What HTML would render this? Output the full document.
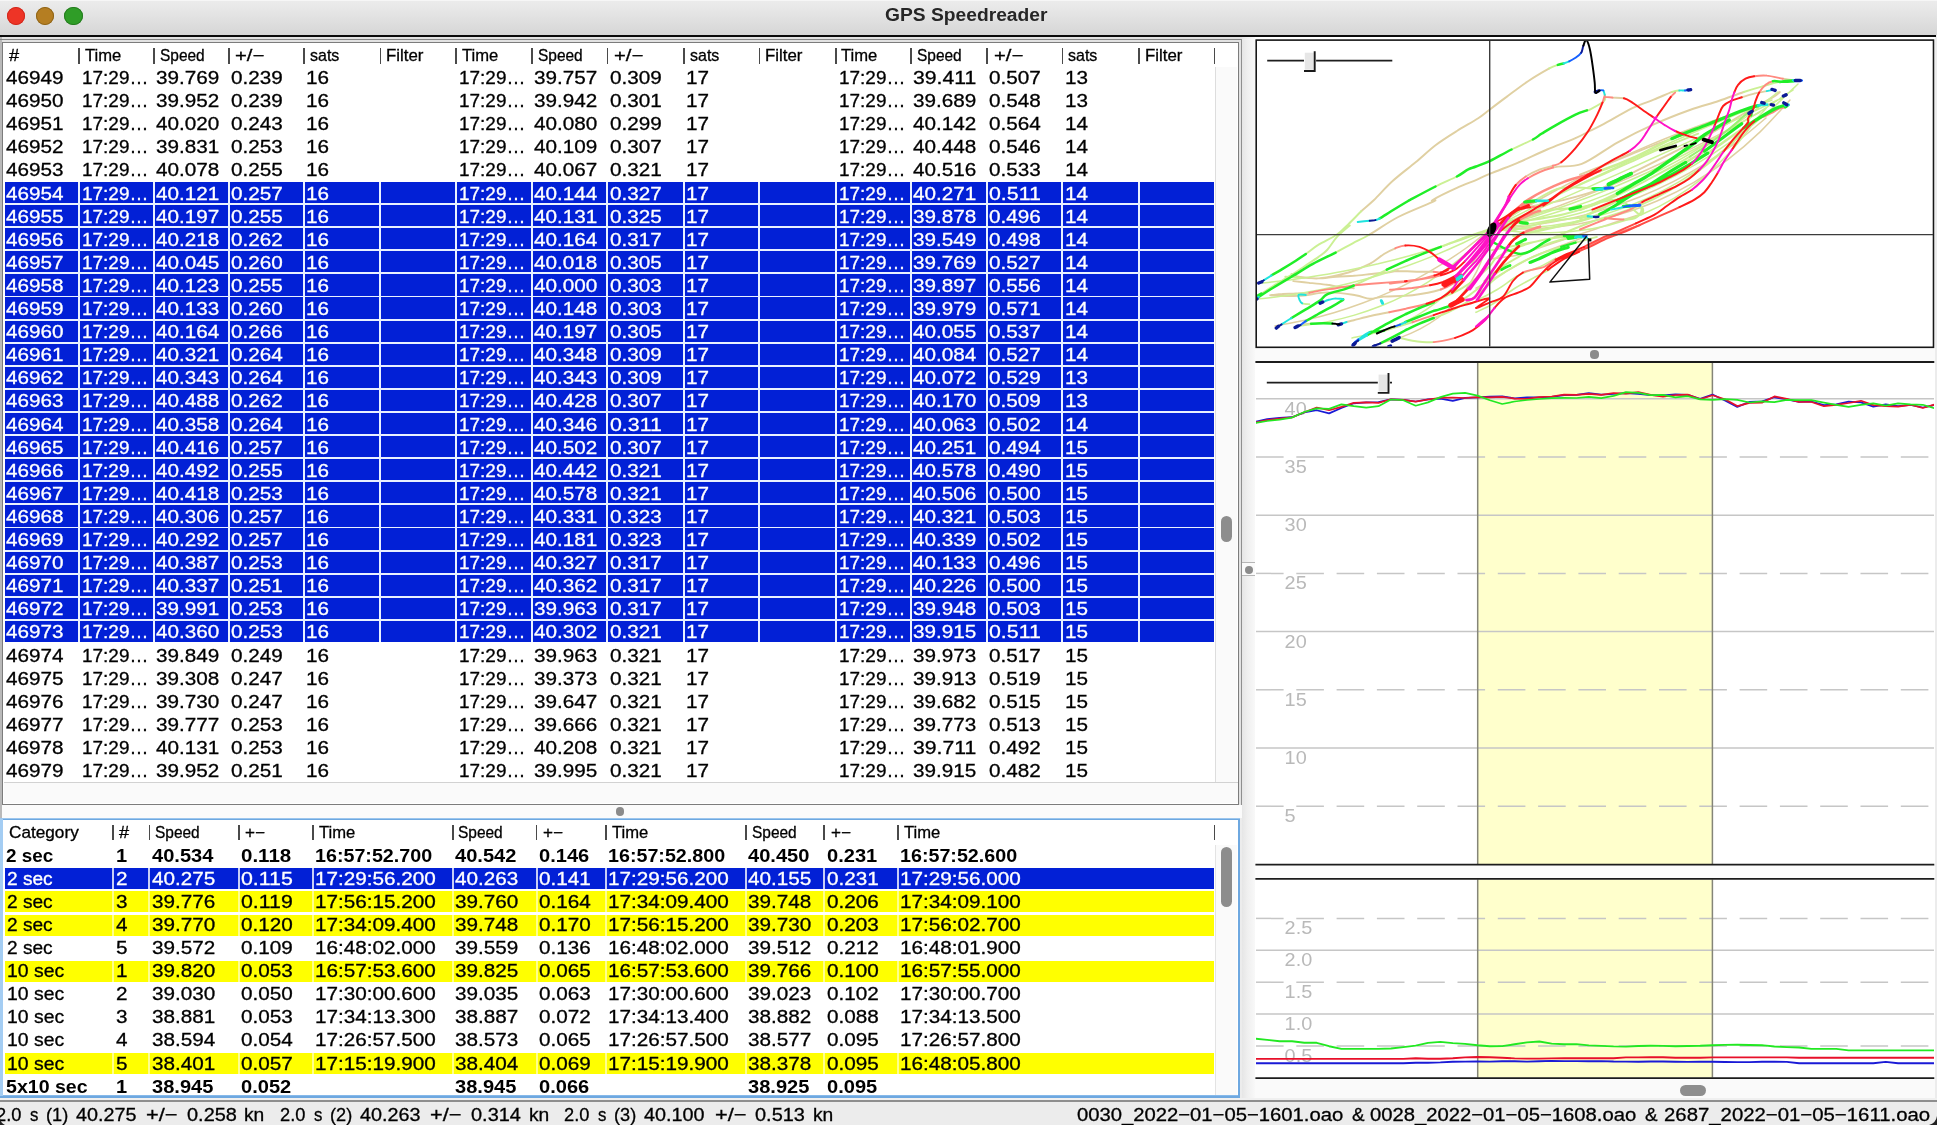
<!DOCTYPE html>
<html><head><meta charset="utf-8"><title>GPS Speedreader</title>
<style>
html,body{margin:0;padding:0;}
body{width:1937px;height:1125px;overflow:hidden;background:#ececec;position:relative;font-family:"Liberation Sans",sans-serif;}
#root{position:absolute;left:0;top:0;width:1937px;height:1125px;overflow:hidden;will-change:transform;transform:translateZ(0);filter:blur(0.4px);}
.b{position:absolute;display:block;}
.t{position:absolute;white-space:nowrap;transform-origin:0 50%;display:block;line-height:20px;color:#000;}
.d{font-size:18.3px;-webkit-text-stroke:0.3px;}
.db{font-size:18.3px;font-weight:bold;}
.h{font-size:16.1px;-webkit-text-stroke:0.3px;}
.w{color:#fff;}
svg text{font-family:"Liberation Sans",sans-serif;}
</style></head><body><div id="root">
<div class="b" style="left:0.00px;top:0.00px;width:1937.00px;height:35.00px;background:linear-gradient(#ececec,#e6e6e6 30%,#d6d6d6);"></div>
<div class="b" style="left:0.00px;top:0.00px;width:1937.00px;height:1.00px;background:#f6f6f6;"></div>
<div class="b" style="left:0.00px;top:35.00px;width:1935.50px;height:2.00px;background:#0a0a0a;"></div>
<div class="b" style="left:6.9px;top:6.9px;width:18.4px;height:18.4px;border-radius:50%;background:#ee3426;box-shadow:inset 0 0 0 1px #d0281c"></div>
<div class="b" style="left:35.9px;top:6.9px;width:18.4px;height:18.4px;border-radius:50%;background:#b57e22;box-shadow:inset 0 0 0 1px #8e6418"></div>
<div class="b" style="left:64.4px;top:6.9px;width:18.4px;height:18.4px;border-radius:50%;background:#2f9d27;box-shadow:inset 0 0 0 1px #267a20"></div>
<span class="t" style="left:885.3px;top:5.2px;font-size:17.6px;font-weight:bold;color:#262626;transform:scaleX(1.093);">GPS Speedreader</span>
<div class="b" style="left:0.00px;top:37.00px;width:1243.00px;height:768.00px;background:#e2e2e2;"></div>
<div class="b" style="left:0.00px;top:37.00px;width:1.60px;height:1063.00px;background:#b9b9b9;"></div>
<div class="b" style="left:0.00px;top:39.00px;width:1242.00px;height:1.00px;background:#858585;"></div>
<div class="b" style="left:1241.00px;top:39.00px;width:1.20px;height:766.00px;background:#8f8f8f;"></div>
<div class="b" style="left:2.00px;top:42.00px;width:1237.00px;height:762.50px;background:#7c7c7c;"></div>
<div class="b" style="left:3.00px;top:43.00px;width:1235.00px;height:760.50px;background:#ffffff;"></div>
<div class="b" style="left:1214.60px;top:67.00px;width:22.60px;height:716.00px;background:#fafafa;border-left:1px solid #dddddd;box-sizing:border-box;"></div>
<div class="b" style="left:3.50px;top:782.00px;width:1234.70px;height:21.00px;background:#fafafa;border-top:1px solid #d2d2d2;box-sizing:border-box;"></div>
<div class="b" style="left:1221.00px;top:515.50px;width:11.40px;height:26.20px;background:#8d8d8d;border-radius:5.7px;"></div>
<div class="b" style="left:78.10px;top:47.60px;width:1.70px;height:16.20px;background:#4a4a4a;"></div>
<div class="b" style="left:153.10px;top:47.60px;width:1.70px;height:16.20px;background:#4a4a4a;"></div>
<div class="b" style="left:228.00px;top:47.60px;width:1.70px;height:16.20px;background:#4a4a4a;"></div>
<div class="b" style="left:303.10px;top:47.60px;width:1.70px;height:16.20px;background:#4a4a4a;"></div>
<div class="b" style="left:379.50px;top:47.60px;width:1.70px;height:16.20px;background:#4a4a4a;"></div>
<div class="b" style="left:455.10px;top:47.60px;width:1.70px;height:16.20px;background:#4a4a4a;"></div>
<div class="b" style="left:531.40px;top:47.60px;width:1.70px;height:16.20px;background:#4a4a4a;"></div>
<div class="b" style="left:606.70px;top:47.60px;width:1.70px;height:16.20px;background:#4a4a4a;"></div>
<div class="b" style="left:683.10px;top:47.60px;width:1.70px;height:16.20px;background:#4a4a4a;"></div>
<div class="b" style="left:758.60px;top:47.60px;width:1.70px;height:16.20px;background:#4a4a4a;"></div>
<div class="b" style="left:835.00px;top:47.60px;width:1.70px;height:16.20px;background:#4a4a4a;"></div>
<div class="b" style="left:910.10px;top:47.60px;width:1.70px;height:16.20px;background:#4a4a4a;"></div>
<div class="b" style="left:986.40px;top:47.60px;width:1.70px;height:16.20px;background:#4a4a4a;"></div>
<div class="b" style="left:1061.80px;top:47.60px;width:1.70px;height:16.20px;background:#4a4a4a;"></div>
<div class="b" style="left:1138.10px;top:47.60px;width:1.70px;height:16.20px;background:#4a4a4a;"></div>
<div class="b" style="left:1213.70px;top:47.60px;width:1.70px;height:16.20px;background:#4a4a4a;"></div>
<span class="t h" style="left:8.6px;top:44.9px;transform:scaleX(1.131);">#</span>
<span class="t h" style="left:84.5px;top:44.9px;transform:scaleX(1.032);">Time</span>
<span class="t h" style="left:159.5px;top:44.9px;transform:scaleX(0.961);">Speed</span>
<span class="t h" style="left:235.2px;top:44.9px;transform:scaleX(1.259);">+/−</span>
<span class="t h" style="left:309.6px;top:44.9px;transform:scaleX(0.994);">sats</span>
<span class="t h" style="left:386.2px;top:44.9px;transform:scaleX(1.046);">Filter</span>
<span class="t h" style="left:461.5px;top:44.9px;transform:scaleX(1.032);">Time</span>
<span class="t h" style="left:537.8px;top:44.9px;transform:scaleX(0.961);">Speed</span>
<span class="t h" style="left:613.9px;top:44.9px;transform:scaleX(1.259);">+/−</span>
<span class="t h" style="left:689.6px;top:44.9px;transform:scaleX(0.994);">sats</span>
<span class="t h" style="left:765.3px;top:44.9px;transform:scaleX(1.046);">Filter</span>
<span class="t h" style="left:841.4px;top:44.9px;transform:scaleX(1.032);">Time</span>
<span class="t h" style="left:916.5px;top:44.9px;transform:scaleX(0.961);">Speed</span>
<span class="t h" style="left:993.6px;top:44.9px;transform:scaleX(1.259);">+/−</span>
<span class="t h" style="left:1068.3px;top:44.9px;transform:scaleX(0.994);">sats</span>
<span class="t h" style="left:1144.8px;top:44.9px;transform:scaleX(1.046);">Filter</span>
<div class="b" style="left:4.60px;top:182.20px;width:1209.20px;height:460.10px;background:#0220d6;"></div>
<div class="b" style="left:4.60px;top:203.15px;width:1209.20px;height:1.90px;background:#e9f1ff;"></div>
<div class="b" style="left:4.60px;top:226.25px;width:1209.20px;height:1.90px;background:#e9f1ff;"></div>
<div class="b" style="left:4.60px;top:249.35px;width:1209.20px;height:1.90px;background:#e9f1ff;"></div>
<div class="b" style="left:4.60px;top:272.45px;width:1209.20px;height:1.90px;background:#e9f1ff;"></div>
<div class="b" style="left:4.60px;top:295.55px;width:1209.20px;height:1.90px;background:#e9f1ff;"></div>
<div class="b" style="left:4.60px;top:318.65px;width:1209.20px;height:1.90px;background:#e9f1ff;"></div>
<div class="b" style="left:4.60px;top:341.75px;width:1209.20px;height:1.90px;background:#e9f1ff;"></div>
<div class="b" style="left:4.60px;top:364.85px;width:1209.20px;height:1.90px;background:#e9f1ff;"></div>
<div class="b" style="left:4.60px;top:387.95px;width:1209.20px;height:1.90px;background:#e9f1ff;"></div>
<div class="b" style="left:4.60px;top:411.05px;width:1209.20px;height:1.90px;background:#e9f1ff;"></div>
<div class="b" style="left:4.60px;top:434.15px;width:1209.20px;height:1.90px;background:#e9f1ff;"></div>
<div class="b" style="left:4.60px;top:457.25px;width:1209.20px;height:1.90px;background:#e9f1ff;"></div>
<div class="b" style="left:4.60px;top:480.35px;width:1209.20px;height:1.90px;background:#e9f1ff;"></div>
<div class="b" style="left:4.60px;top:503.45px;width:1209.20px;height:1.90px;background:#e9f1ff;"></div>
<div class="b" style="left:4.60px;top:526.55px;width:1209.20px;height:1.90px;background:#e9f1ff;"></div>
<div class="b" style="left:4.60px;top:549.65px;width:1209.20px;height:1.90px;background:#e9f1ff;"></div>
<div class="b" style="left:4.60px;top:572.75px;width:1209.20px;height:1.90px;background:#e9f1ff;"></div>
<div class="b" style="left:4.60px;top:595.85px;width:1209.20px;height:1.90px;background:#e9f1ff;"></div>
<div class="b" style="left:4.60px;top:618.95px;width:1209.20px;height:1.90px;background:#e9f1ff;"></div>
<div class="b" style="left:77.70px;top:182.20px;width:2.10px;height:460.10px;background:#e9f1ff;"></div>
<div class="b" style="left:152.70px;top:182.20px;width:2.10px;height:460.10px;background:#e9f1ff;"></div>
<div class="b" style="left:227.60px;top:182.20px;width:2.10px;height:460.10px;background:#e9f1ff;"></div>
<div class="b" style="left:302.70px;top:182.20px;width:2.10px;height:460.10px;background:#e9f1ff;"></div>
<div class="b" style="left:379.10px;top:182.20px;width:2.10px;height:460.10px;background:#e9f1ff;"></div>
<div class="b" style="left:454.70px;top:182.20px;width:2.10px;height:460.10px;background:#e9f1ff;"></div>
<div class="b" style="left:531.00px;top:182.20px;width:2.10px;height:460.10px;background:#e9f1ff;"></div>
<div class="b" style="left:606.30px;top:182.20px;width:2.10px;height:460.10px;background:#e9f1ff;"></div>
<div class="b" style="left:682.70px;top:182.20px;width:2.10px;height:460.10px;background:#e9f1ff;"></div>
<div class="b" style="left:758.20px;top:182.20px;width:2.10px;height:460.10px;background:#e9f1ff;"></div>
<div class="b" style="left:834.60px;top:182.20px;width:2.10px;height:460.10px;background:#e9f1ff;"></div>
<div class="b" style="left:909.70px;top:182.20px;width:2.10px;height:460.10px;background:#e9f1ff;"></div>
<div class="b" style="left:986.00px;top:182.20px;width:2.10px;height:460.10px;background:#e9f1ff;"></div>
<div class="b" style="left:1061.40px;top:182.20px;width:2.10px;height:460.10px;background:#e9f1ff;"></div>
<div class="b" style="left:1137.70px;top:182.20px;width:2.10px;height:460.10px;background:#e9f1ff;"></div>
<span class="t d" style="left:5.6px;top:68.0px;transform:scaleX(1.132);">46949</span>
<span class="t d" style="left:82.2px;top:68.0px;transform:scaleX(1.037);">17:29…</span>
<span class="t d" style="left:156.1px;top:68.0px;transform:scaleX(1.132);">39.769</span>
<span class="t d" style="left:231.0px;top:68.0px;transform:scaleX(1.132);">0.239</span>
<span class="t d" style="left:306.1px;top:68.0px;transform:scaleX(1.132);">16</span>
<span class="t d" style="left:459.2px;top:68.0px;transform:scaleX(1.037);">17:29…</span>
<span class="t d" style="left:534.4px;top:68.0px;transform:scaleX(1.132);">39.757</span>
<span class="t d" style="left:609.7px;top:68.0px;transform:scaleX(1.132);">0.309</span>
<span class="t d" style="left:686.1px;top:68.0px;transform:scaleX(1.132);">17</span>
<span class="t d" style="left:839.1px;top:68.0px;transform:scaleX(1.037);">17:29…</span>
<span class="t d" style="left:913.1px;top:68.0px;transform:scaleX(1.160);">39.411</span>
<span class="t d" style="left:989.4px;top:68.0px;transform:scaleX(1.132);">0.507</span>
<span class="t d" style="left:1064.8px;top:68.0px;transform:scaleX(1.132);">13</span>
<span class="t d" style="left:5.6px;top:91.1px;transform:scaleX(1.132);">46950</span>
<span class="t d" style="left:82.2px;top:91.1px;transform:scaleX(1.037);">17:29…</span>
<span class="t d" style="left:156.1px;top:91.1px;transform:scaleX(1.132);">39.952</span>
<span class="t d" style="left:231.0px;top:91.1px;transform:scaleX(1.132);">0.239</span>
<span class="t d" style="left:306.1px;top:91.1px;transform:scaleX(1.132);">16</span>
<span class="t d" style="left:459.2px;top:91.1px;transform:scaleX(1.037);">17:29…</span>
<span class="t d" style="left:534.4px;top:91.1px;transform:scaleX(1.132);">39.942</span>
<span class="t d" style="left:609.7px;top:91.1px;transform:scaleX(1.132);">0.301</span>
<span class="t d" style="left:686.1px;top:91.1px;transform:scaleX(1.132);">17</span>
<span class="t d" style="left:839.1px;top:91.1px;transform:scaleX(1.037);">17:29…</span>
<span class="t d" style="left:913.1px;top:91.1px;transform:scaleX(1.132);">39.689</span>
<span class="t d" style="left:989.4px;top:91.1px;transform:scaleX(1.132);">0.548</span>
<span class="t d" style="left:1064.8px;top:91.1px;transform:scaleX(1.132);">13</span>
<span class="t d" style="left:5.6px;top:114.2px;transform:scaleX(1.132);">46951</span>
<span class="t d" style="left:82.2px;top:114.2px;transform:scaleX(1.037);">17:29…</span>
<span class="t d" style="left:156.1px;top:114.2px;transform:scaleX(1.132);">40.020</span>
<span class="t d" style="left:231.0px;top:114.2px;transform:scaleX(1.132);">0.243</span>
<span class="t d" style="left:306.1px;top:114.2px;transform:scaleX(1.132);">16</span>
<span class="t d" style="left:459.2px;top:114.2px;transform:scaleX(1.037);">17:29…</span>
<span class="t d" style="left:534.4px;top:114.2px;transform:scaleX(1.132);">40.080</span>
<span class="t d" style="left:609.7px;top:114.2px;transform:scaleX(1.132);">0.299</span>
<span class="t d" style="left:686.1px;top:114.2px;transform:scaleX(1.132);">17</span>
<span class="t d" style="left:839.1px;top:114.2px;transform:scaleX(1.037);">17:29…</span>
<span class="t d" style="left:913.1px;top:114.2px;transform:scaleX(1.132);">40.142</span>
<span class="t d" style="left:989.4px;top:114.2px;transform:scaleX(1.132);">0.564</span>
<span class="t d" style="left:1064.8px;top:114.2px;transform:scaleX(1.132);">14</span>
<span class="t d" style="left:5.6px;top:137.3px;transform:scaleX(1.132);">46952</span>
<span class="t d" style="left:82.2px;top:137.3px;transform:scaleX(1.037);">17:29…</span>
<span class="t d" style="left:156.1px;top:137.3px;transform:scaleX(1.132);">39.831</span>
<span class="t d" style="left:231.0px;top:137.3px;transform:scaleX(1.132);">0.253</span>
<span class="t d" style="left:306.1px;top:137.3px;transform:scaleX(1.132);">16</span>
<span class="t d" style="left:459.2px;top:137.3px;transform:scaleX(1.037);">17:29…</span>
<span class="t d" style="left:534.4px;top:137.3px;transform:scaleX(1.132);">40.109</span>
<span class="t d" style="left:609.7px;top:137.3px;transform:scaleX(1.132);">0.307</span>
<span class="t d" style="left:686.1px;top:137.3px;transform:scaleX(1.132);">17</span>
<span class="t d" style="left:839.1px;top:137.3px;transform:scaleX(1.037);">17:29…</span>
<span class="t d" style="left:913.1px;top:137.3px;transform:scaleX(1.132);">40.448</span>
<span class="t d" style="left:989.4px;top:137.3px;transform:scaleX(1.132);">0.546</span>
<span class="t d" style="left:1064.8px;top:137.3px;transform:scaleX(1.132);">14</span>
<span class="t d" style="left:5.6px;top:160.4px;transform:scaleX(1.132);">46953</span>
<span class="t d" style="left:82.2px;top:160.4px;transform:scaleX(1.037);">17:29…</span>
<span class="t d" style="left:156.1px;top:160.4px;transform:scaleX(1.132);">40.078</span>
<span class="t d" style="left:231.0px;top:160.4px;transform:scaleX(1.132);">0.255</span>
<span class="t d" style="left:306.1px;top:160.4px;transform:scaleX(1.132);">16</span>
<span class="t d" style="left:459.2px;top:160.4px;transform:scaleX(1.037);">17:29…</span>
<span class="t d" style="left:534.4px;top:160.4px;transform:scaleX(1.132);">40.067</span>
<span class="t d" style="left:609.7px;top:160.4px;transform:scaleX(1.132);">0.321</span>
<span class="t d" style="left:686.1px;top:160.4px;transform:scaleX(1.132);">17</span>
<span class="t d" style="left:839.1px;top:160.4px;transform:scaleX(1.037);">17:29…</span>
<span class="t d" style="left:913.1px;top:160.4px;transform:scaleX(1.132);">40.516</span>
<span class="t d" style="left:989.4px;top:160.4px;transform:scaleX(1.132);">0.533</span>
<span class="t d" style="left:1064.8px;top:160.4px;transform:scaleX(1.132);">14</span>
<span class="t d w" style="left:5.6px;top:183.5px;transform:scaleX(1.132);">46954</span>
<span class="t d w" style="left:82.2px;top:183.5px;transform:scaleX(1.037);">17:29…</span>
<span class="t d w" style="left:156.1px;top:183.5px;transform:scaleX(1.132);">40.121</span>
<span class="t d w" style="left:231.0px;top:183.5px;transform:scaleX(1.132);">0.257</span>
<span class="t d w" style="left:306.1px;top:183.5px;transform:scaleX(1.132);">16</span>
<span class="t d w" style="left:459.2px;top:183.5px;transform:scaleX(1.037);">17:29…</span>
<span class="t d w" style="left:534.4px;top:183.5px;transform:scaleX(1.132);">40.144</span>
<span class="t d w" style="left:609.7px;top:183.5px;transform:scaleX(1.132);">0.327</span>
<span class="t d w" style="left:686.1px;top:183.5px;transform:scaleX(1.132);">17</span>
<span class="t d w" style="left:839.1px;top:183.5px;transform:scaleX(1.037);">17:29…</span>
<span class="t d w" style="left:913.1px;top:183.5px;transform:scaleX(1.132);">40.271</span>
<span class="t d w" style="left:989.4px;top:183.5px;transform:scaleX(1.166);">0.511</span>
<span class="t d w" style="left:1064.8px;top:183.5px;transform:scaleX(1.132);">14</span>
<span class="t d w" style="left:5.6px;top:206.6px;transform:scaleX(1.132);">46955</span>
<span class="t d w" style="left:82.2px;top:206.6px;transform:scaleX(1.037);">17:29…</span>
<span class="t d w" style="left:156.1px;top:206.6px;transform:scaleX(1.132);">40.197</span>
<span class="t d w" style="left:231.0px;top:206.6px;transform:scaleX(1.132);">0.255</span>
<span class="t d w" style="left:306.1px;top:206.6px;transform:scaleX(1.132);">16</span>
<span class="t d w" style="left:459.2px;top:206.6px;transform:scaleX(1.037);">17:29…</span>
<span class="t d w" style="left:534.4px;top:206.6px;transform:scaleX(1.132);">40.131</span>
<span class="t d w" style="left:609.7px;top:206.6px;transform:scaleX(1.132);">0.325</span>
<span class="t d w" style="left:686.1px;top:206.6px;transform:scaleX(1.132);">17</span>
<span class="t d w" style="left:839.1px;top:206.6px;transform:scaleX(1.037);">17:29…</span>
<span class="t d w" style="left:913.1px;top:206.6px;transform:scaleX(1.132);">39.878</span>
<span class="t d w" style="left:989.4px;top:206.6px;transform:scaleX(1.132);">0.496</span>
<span class="t d w" style="left:1064.8px;top:206.6px;transform:scaleX(1.132);">14</span>
<span class="t d w" style="left:5.6px;top:229.7px;transform:scaleX(1.132);">46956</span>
<span class="t d w" style="left:82.2px;top:229.7px;transform:scaleX(1.037);">17:29…</span>
<span class="t d w" style="left:156.1px;top:229.7px;transform:scaleX(1.132);">40.218</span>
<span class="t d w" style="left:231.0px;top:229.7px;transform:scaleX(1.132);">0.262</span>
<span class="t d w" style="left:306.1px;top:229.7px;transform:scaleX(1.132);">16</span>
<span class="t d w" style="left:459.2px;top:229.7px;transform:scaleX(1.037);">17:29…</span>
<span class="t d w" style="left:534.4px;top:229.7px;transform:scaleX(1.132);">40.164</span>
<span class="t d w" style="left:609.7px;top:229.7px;transform:scaleX(1.132);">0.317</span>
<span class="t d w" style="left:686.1px;top:229.7px;transform:scaleX(1.132);">17</span>
<span class="t d w" style="left:839.1px;top:229.7px;transform:scaleX(1.037);">17:29…</span>
<span class="t d w" style="left:913.1px;top:229.7px;transform:scaleX(1.132);">39.549</span>
<span class="t d w" style="left:989.4px;top:229.7px;transform:scaleX(1.132);">0.498</span>
<span class="t d w" style="left:1064.8px;top:229.7px;transform:scaleX(1.132);">14</span>
<span class="t d w" style="left:5.6px;top:252.8px;transform:scaleX(1.132);">46957</span>
<span class="t d w" style="left:82.2px;top:252.8px;transform:scaleX(1.037);">17:29…</span>
<span class="t d w" style="left:156.1px;top:252.8px;transform:scaleX(1.132);">40.045</span>
<span class="t d w" style="left:231.0px;top:252.8px;transform:scaleX(1.132);">0.260</span>
<span class="t d w" style="left:306.1px;top:252.8px;transform:scaleX(1.132);">16</span>
<span class="t d w" style="left:459.2px;top:252.8px;transform:scaleX(1.037);">17:29…</span>
<span class="t d w" style="left:534.4px;top:252.8px;transform:scaleX(1.132);">40.018</span>
<span class="t d w" style="left:609.7px;top:252.8px;transform:scaleX(1.132);">0.305</span>
<span class="t d w" style="left:686.1px;top:252.8px;transform:scaleX(1.132);">17</span>
<span class="t d w" style="left:839.1px;top:252.8px;transform:scaleX(1.037);">17:29…</span>
<span class="t d w" style="left:913.1px;top:252.8px;transform:scaleX(1.132);">39.769</span>
<span class="t d w" style="left:989.4px;top:252.8px;transform:scaleX(1.132);">0.527</span>
<span class="t d w" style="left:1064.8px;top:252.8px;transform:scaleX(1.132);">14</span>
<span class="t d w" style="left:5.6px;top:275.9px;transform:scaleX(1.132);">46958</span>
<span class="t d w" style="left:82.2px;top:275.9px;transform:scaleX(1.037);">17:29…</span>
<span class="t d w" style="left:156.1px;top:275.9px;transform:scaleX(1.132);">40.123</span>
<span class="t d w" style="left:231.0px;top:275.9px;transform:scaleX(1.132);">0.255</span>
<span class="t d w" style="left:306.1px;top:275.9px;transform:scaleX(1.132);">16</span>
<span class="t d w" style="left:459.2px;top:275.9px;transform:scaleX(1.037);">17:29…</span>
<span class="t d w" style="left:534.4px;top:275.9px;transform:scaleX(1.132);">40.000</span>
<span class="t d w" style="left:609.7px;top:275.9px;transform:scaleX(1.132);">0.303</span>
<span class="t d w" style="left:686.1px;top:275.9px;transform:scaleX(1.132);">17</span>
<span class="t d w" style="left:839.1px;top:275.9px;transform:scaleX(1.037);">17:29…</span>
<span class="t d w" style="left:913.1px;top:275.9px;transform:scaleX(1.132);">39.897</span>
<span class="t d w" style="left:989.4px;top:275.9px;transform:scaleX(1.132);">0.556</span>
<span class="t d w" style="left:1064.8px;top:275.9px;transform:scaleX(1.132);">14</span>
<span class="t d w" style="left:5.6px;top:299.0px;transform:scaleX(1.132);">46959</span>
<span class="t d w" style="left:82.2px;top:299.0px;transform:scaleX(1.037);">17:29…</span>
<span class="t d w" style="left:156.1px;top:299.0px;transform:scaleX(1.132);">40.133</span>
<span class="t d w" style="left:231.0px;top:299.0px;transform:scaleX(1.132);">0.260</span>
<span class="t d w" style="left:306.1px;top:299.0px;transform:scaleX(1.132);">16</span>
<span class="t d w" style="left:459.2px;top:299.0px;transform:scaleX(1.037);">17:29…</span>
<span class="t d w" style="left:534.4px;top:299.0px;transform:scaleX(1.132);">40.148</span>
<span class="t d w" style="left:609.7px;top:299.0px;transform:scaleX(1.132);">0.303</span>
<span class="t d w" style="left:686.1px;top:299.0px;transform:scaleX(1.132);">17</span>
<span class="t d w" style="left:839.1px;top:299.0px;transform:scaleX(1.037);">17:29…</span>
<span class="t d w" style="left:913.1px;top:299.0px;transform:scaleX(1.132);">39.979</span>
<span class="t d w" style="left:989.4px;top:299.0px;transform:scaleX(1.132);">0.571</span>
<span class="t d w" style="left:1064.8px;top:299.0px;transform:scaleX(1.132);">14</span>
<span class="t d w" style="left:5.6px;top:322.1px;transform:scaleX(1.132);">46960</span>
<span class="t d w" style="left:82.2px;top:322.1px;transform:scaleX(1.037);">17:29…</span>
<span class="t d w" style="left:156.1px;top:322.1px;transform:scaleX(1.132);">40.164</span>
<span class="t d w" style="left:231.0px;top:322.1px;transform:scaleX(1.132);">0.266</span>
<span class="t d w" style="left:306.1px;top:322.1px;transform:scaleX(1.132);">16</span>
<span class="t d w" style="left:459.2px;top:322.1px;transform:scaleX(1.037);">17:29…</span>
<span class="t d w" style="left:534.4px;top:322.1px;transform:scaleX(1.132);">40.197</span>
<span class="t d w" style="left:609.7px;top:322.1px;transform:scaleX(1.132);">0.305</span>
<span class="t d w" style="left:686.1px;top:322.1px;transform:scaleX(1.132);">17</span>
<span class="t d w" style="left:839.1px;top:322.1px;transform:scaleX(1.037);">17:29…</span>
<span class="t d w" style="left:913.1px;top:322.1px;transform:scaleX(1.132);">40.055</span>
<span class="t d w" style="left:989.4px;top:322.1px;transform:scaleX(1.132);">0.537</span>
<span class="t d w" style="left:1064.8px;top:322.1px;transform:scaleX(1.132);">14</span>
<span class="t d w" style="left:5.6px;top:345.2px;transform:scaleX(1.132);">46961</span>
<span class="t d w" style="left:82.2px;top:345.2px;transform:scaleX(1.037);">17:29…</span>
<span class="t d w" style="left:156.1px;top:345.2px;transform:scaleX(1.132);">40.321</span>
<span class="t d w" style="left:231.0px;top:345.2px;transform:scaleX(1.132);">0.264</span>
<span class="t d w" style="left:306.1px;top:345.2px;transform:scaleX(1.132);">16</span>
<span class="t d w" style="left:459.2px;top:345.2px;transform:scaleX(1.037);">17:29…</span>
<span class="t d w" style="left:534.4px;top:345.2px;transform:scaleX(1.132);">40.348</span>
<span class="t d w" style="left:609.7px;top:345.2px;transform:scaleX(1.132);">0.309</span>
<span class="t d w" style="left:686.1px;top:345.2px;transform:scaleX(1.132);">17</span>
<span class="t d w" style="left:839.1px;top:345.2px;transform:scaleX(1.037);">17:29…</span>
<span class="t d w" style="left:913.1px;top:345.2px;transform:scaleX(1.132);">40.084</span>
<span class="t d w" style="left:989.4px;top:345.2px;transform:scaleX(1.132);">0.527</span>
<span class="t d w" style="left:1064.8px;top:345.2px;transform:scaleX(1.132);">14</span>
<span class="t d w" style="left:5.6px;top:368.3px;transform:scaleX(1.132);">46962</span>
<span class="t d w" style="left:82.2px;top:368.3px;transform:scaleX(1.037);">17:29…</span>
<span class="t d w" style="left:156.1px;top:368.3px;transform:scaleX(1.132);">40.343</span>
<span class="t d w" style="left:231.0px;top:368.3px;transform:scaleX(1.132);">0.264</span>
<span class="t d w" style="left:306.1px;top:368.3px;transform:scaleX(1.132);">16</span>
<span class="t d w" style="left:459.2px;top:368.3px;transform:scaleX(1.037);">17:29…</span>
<span class="t d w" style="left:534.4px;top:368.3px;transform:scaleX(1.132);">40.343</span>
<span class="t d w" style="left:609.7px;top:368.3px;transform:scaleX(1.132);">0.309</span>
<span class="t d w" style="left:686.1px;top:368.3px;transform:scaleX(1.132);">17</span>
<span class="t d w" style="left:839.1px;top:368.3px;transform:scaleX(1.037);">17:29…</span>
<span class="t d w" style="left:913.1px;top:368.3px;transform:scaleX(1.132);">40.072</span>
<span class="t d w" style="left:989.4px;top:368.3px;transform:scaleX(1.132);">0.529</span>
<span class="t d w" style="left:1064.8px;top:368.3px;transform:scaleX(1.132);">13</span>
<span class="t d w" style="left:5.6px;top:391.4px;transform:scaleX(1.132);">46963</span>
<span class="t d w" style="left:82.2px;top:391.4px;transform:scaleX(1.037);">17:29…</span>
<span class="t d w" style="left:156.1px;top:391.4px;transform:scaleX(1.132);">40.488</span>
<span class="t d w" style="left:231.0px;top:391.4px;transform:scaleX(1.132);">0.262</span>
<span class="t d w" style="left:306.1px;top:391.4px;transform:scaleX(1.132);">16</span>
<span class="t d w" style="left:459.2px;top:391.4px;transform:scaleX(1.037);">17:29…</span>
<span class="t d w" style="left:534.4px;top:391.4px;transform:scaleX(1.132);">40.428</span>
<span class="t d w" style="left:609.7px;top:391.4px;transform:scaleX(1.132);">0.307</span>
<span class="t d w" style="left:686.1px;top:391.4px;transform:scaleX(1.132);">17</span>
<span class="t d w" style="left:839.1px;top:391.4px;transform:scaleX(1.037);">17:29…</span>
<span class="t d w" style="left:913.1px;top:391.4px;transform:scaleX(1.132);">40.170</span>
<span class="t d w" style="left:989.4px;top:391.4px;transform:scaleX(1.132);">0.509</span>
<span class="t d w" style="left:1064.8px;top:391.4px;transform:scaleX(1.132);">13</span>
<span class="t d w" style="left:5.6px;top:414.5px;transform:scaleX(1.132);">46964</span>
<span class="t d w" style="left:82.2px;top:414.5px;transform:scaleX(1.037);">17:29…</span>
<span class="t d w" style="left:156.1px;top:414.5px;transform:scaleX(1.132);">40.358</span>
<span class="t d w" style="left:231.0px;top:414.5px;transform:scaleX(1.132);">0.264</span>
<span class="t d w" style="left:306.1px;top:414.5px;transform:scaleX(1.132);">16</span>
<span class="t d w" style="left:459.2px;top:414.5px;transform:scaleX(1.037);">17:29…</span>
<span class="t d w" style="left:534.4px;top:414.5px;transform:scaleX(1.132);">40.346</span>
<span class="t d w" style="left:609.7px;top:414.5px;transform:scaleX(1.166);">0.311</span>
<span class="t d w" style="left:686.1px;top:414.5px;transform:scaleX(1.132);">17</span>
<span class="t d w" style="left:839.1px;top:414.5px;transform:scaleX(1.037);">17:29…</span>
<span class="t d w" style="left:913.1px;top:414.5px;transform:scaleX(1.132);">40.063</span>
<span class="t d w" style="left:989.4px;top:414.5px;transform:scaleX(1.132);">0.502</span>
<span class="t d w" style="left:1064.8px;top:414.5px;transform:scaleX(1.132);">14</span>
<span class="t d w" style="left:5.6px;top:437.6px;transform:scaleX(1.132);">46965</span>
<span class="t d w" style="left:82.2px;top:437.6px;transform:scaleX(1.037);">17:29…</span>
<span class="t d w" style="left:156.1px;top:437.6px;transform:scaleX(1.132);">40.416</span>
<span class="t d w" style="left:231.0px;top:437.6px;transform:scaleX(1.132);">0.257</span>
<span class="t d w" style="left:306.1px;top:437.6px;transform:scaleX(1.132);">16</span>
<span class="t d w" style="left:459.2px;top:437.6px;transform:scaleX(1.037);">17:29…</span>
<span class="t d w" style="left:534.4px;top:437.6px;transform:scaleX(1.132);">40.502</span>
<span class="t d w" style="left:609.7px;top:437.6px;transform:scaleX(1.132);">0.307</span>
<span class="t d w" style="left:686.1px;top:437.6px;transform:scaleX(1.132);">17</span>
<span class="t d w" style="left:839.1px;top:437.6px;transform:scaleX(1.037);">17:29…</span>
<span class="t d w" style="left:913.1px;top:437.6px;transform:scaleX(1.132);">40.251</span>
<span class="t d w" style="left:989.4px;top:437.6px;transform:scaleX(1.132);">0.494</span>
<span class="t d w" style="left:1064.8px;top:437.6px;transform:scaleX(1.132);">15</span>
<span class="t d w" style="left:5.6px;top:460.7px;transform:scaleX(1.132);">46966</span>
<span class="t d w" style="left:82.2px;top:460.7px;transform:scaleX(1.037);">17:29…</span>
<span class="t d w" style="left:156.1px;top:460.7px;transform:scaleX(1.132);">40.492</span>
<span class="t d w" style="left:231.0px;top:460.7px;transform:scaleX(1.132);">0.255</span>
<span class="t d w" style="left:306.1px;top:460.7px;transform:scaleX(1.132);">16</span>
<span class="t d w" style="left:459.2px;top:460.7px;transform:scaleX(1.037);">17:29…</span>
<span class="t d w" style="left:534.4px;top:460.7px;transform:scaleX(1.132);">40.442</span>
<span class="t d w" style="left:609.7px;top:460.7px;transform:scaleX(1.132);">0.321</span>
<span class="t d w" style="left:686.1px;top:460.7px;transform:scaleX(1.132);">17</span>
<span class="t d w" style="left:839.1px;top:460.7px;transform:scaleX(1.037);">17:29…</span>
<span class="t d w" style="left:913.1px;top:460.7px;transform:scaleX(1.132);">40.578</span>
<span class="t d w" style="left:989.4px;top:460.7px;transform:scaleX(1.132);">0.490</span>
<span class="t d w" style="left:1064.8px;top:460.7px;transform:scaleX(1.132);">15</span>
<span class="t d w" style="left:5.6px;top:483.8px;transform:scaleX(1.132);">46967</span>
<span class="t d w" style="left:82.2px;top:483.8px;transform:scaleX(1.037);">17:29…</span>
<span class="t d w" style="left:156.1px;top:483.8px;transform:scaleX(1.132);">40.418</span>
<span class="t d w" style="left:231.0px;top:483.8px;transform:scaleX(1.132);">0.253</span>
<span class="t d w" style="left:306.1px;top:483.8px;transform:scaleX(1.132);">16</span>
<span class="t d w" style="left:459.2px;top:483.8px;transform:scaleX(1.037);">17:29…</span>
<span class="t d w" style="left:534.4px;top:483.8px;transform:scaleX(1.132);">40.578</span>
<span class="t d w" style="left:609.7px;top:483.8px;transform:scaleX(1.132);">0.321</span>
<span class="t d w" style="left:686.1px;top:483.8px;transform:scaleX(1.132);">17</span>
<span class="t d w" style="left:839.1px;top:483.8px;transform:scaleX(1.037);">17:29…</span>
<span class="t d w" style="left:913.1px;top:483.8px;transform:scaleX(1.132);">40.506</span>
<span class="t d w" style="left:989.4px;top:483.8px;transform:scaleX(1.132);">0.500</span>
<span class="t d w" style="left:1064.8px;top:483.8px;transform:scaleX(1.132);">15</span>
<span class="t d w" style="left:5.6px;top:506.9px;transform:scaleX(1.132);">46968</span>
<span class="t d w" style="left:82.2px;top:506.9px;transform:scaleX(1.037);">17:29…</span>
<span class="t d w" style="left:156.1px;top:506.9px;transform:scaleX(1.132);">40.306</span>
<span class="t d w" style="left:231.0px;top:506.9px;transform:scaleX(1.132);">0.257</span>
<span class="t d w" style="left:306.1px;top:506.9px;transform:scaleX(1.132);">16</span>
<span class="t d w" style="left:459.2px;top:506.9px;transform:scaleX(1.037);">17:29…</span>
<span class="t d w" style="left:534.4px;top:506.9px;transform:scaleX(1.132);">40.331</span>
<span class="t d w" style="left:609.7px;top:506.9px;transform:scaleX(1.132);">0.323</span>
<span class="t d w" style="left:686.1px;top:506.9px;transform:scaleX(1.132);">17</span>
<span class="t d w" style="left:839.1px;top:506.9px;transform:scaleX(1.037);">17:29…</span>
<span class="t d w" style="left:913.1px;top:506.9px;transform:scaleX(1.132);">40.321</span>
<span class="t d w" style="left:989.4px;top:506.9px;transform:scaleX(1.132);">0.503</span>
<span class="t d w" style="left:1064.8px;top:506.9px;transform:scaleX(1.132);">15</span>
<span class="t d w" style="left:5.6px;top:530.0px;transform:scaleX(1.132);">46969</span>
<span class="t d w" style="left:82.2px;top:530.0px;transform:scaleX(1.037);">17:29…</span>
<span class="t d w" style="left:156.1px;top:530.0px;transform:scaleX(1.132);">40.292</span>
<span class="t d w" style="left:231.0px;top:530.0px;transform:scaleX(1.132);">0.257</span>
<span class="t d w" style="left:306.1px;top:530.0px;transform:scaleX(1.132);">16</span>
<span class="t d w" style="left:459.2px;top:530.0px;transform:scaleX(1.037);">17:29…</span>
<span class="t d w" style="left:534.4px;top:530.0px;transform:scaleX(1.132);">40.181</span>
<span class="t d w" style="left:609.7px;top:530.0px;transform:scaleX(1.132);">0.323</span>
<span class="t d w" style="left:686.1px;top:530.0px;transform:scaleX(1.132);">17</span>
<span class="t d w" style="left:839.1px;top:530.0px;transform:scaleX(1.037);">17:29…</span>
<span class="t d w" style="left:913.1px;top:530.0px;transform:scaleX(1.132);">40.339</span>
<span class="t d w" style="left:989.4px;top:530.0px;transform:scaleX(1.132);">0.502</span>
<span class="t d w" style="left:1064.8px;top:530.0px;transform:scaleX(1.132);">15</span>
<span class="t d w" style="left:5.6px;top:553.1px;transform:scaleX(1.132);">46970</span>
<span class="t d w" style="left:82.2px;top:553.1px;transform:scaleX(1.037);">17:29…</span>
<span class="t d w" style="left:156.1px;top:553.1px;transform:scaleX(1.132);">40.387</span>
<span class="t d w" style="left:231.0px;top:553.1px;transform:scaleX(1.132);">0.253</span>
<span class="t d w" style="left:306.1px;top:553.1px;transform:scaleX(1.132);">16</span>
<span class="t d w" style="left:459.2px;top:553.1px;transform:scaleX(1.037);">17:29…</span>
<span class="t d w" style="left:534.4px;top:553.1px;transform:scaleX(1.132);">40.327</span>
<span class="t d w" style="left:609.7px;top:553.1px;transform:scaleX(1.132);">0.317</span>
<span class="t d w" style="left:686.1px;top:553.1px;transform:scaleX(1.132);">17</span>
<span class="t d w" style="left:839.1px;top:553.1px;transform:scaleX(1.037);">17:29…</span>
<span class="t d w" style="left:913.1px;top:553.1px;transform:scaleX(1.132);">40.133</span>
<span class="t d w" style="left:989.4px;top:553.1px;transform:scaleX(1.132);">0.496</span>
<span class="t d w" style="left:1064.8px;top:553.1px;transform:scaleX(1.132);">15</span>
<span class="t d w" style="left:5.6px;top:576.2px;transform:scaleX(1.132);">46971</span>
<span class="t d w" style="left:82.2px;top:576.2px;transform:scaleX(1.037);">17:29…</span>
<span class="t d w" style="left:156.1px;top:576.2px;transform:scaleX(1.132);">40.337</span>
<span class="t d w" style="left:231.0px;top:576.2px;transform:scaleX(1.132);">0.251</span>
<span class="t d w" style="left:306.1px;top:576.2px;transform:scaleX(1.132);">16</span>
<span class="t d w" style="left:459.2px;top:576.2px;transform:scaleX(1.037);">17:29…</span>
<span class="t d w" style="left:534.4px;top:576.2px;transform:scaleX(1.132);">40.362</span>
<span class="t d w" style="left:609.7px;top:576.2px;transform:scaleX(1.132);">0.317</span>
<span class="t d w" style="left:686.1px;top:576.2px;transform:scaleX(1.132);">17</span>
<span class="t d w" style="left:839.1px;top:576.2px;transform:scaleX(1.037);">17:29…</span>
<span class="t d w" style="left:913.1px;top:576.2px;transform:scaleX(1.132);">40.226</span>
<span class="t d w" style="left:989.4px;top:576.2px;transform:scaleX(1.132);">0.500</span>
<span class="t d w" style="left:1064.8px;top:576.2px;transform:scaleX(1.132);">15</span>
<span class="t d w" style="left:5.6px;top:599.3px;transform:scaleX(1.132);">46972</span>
<span class="t d w" style="left:82.2px;top:599.3px;transform:scaleX(1.037);">17:29…</span>
<span class="t d w" style="left:156.1px;top:599.3px;transform:scaleX(1.132);">39.991</span>
<span class="t d w" style="left:231.0px;top:599.3px;transform:scaleX(1.132);">0.253</span>
<span class="t d w" style="left:306.1px;top:599.3px;transform:scaleX(1.132);">16</span>
<span class="t d w" style="left:459.2px;top:599.3px;transform:scaleX(1.037);">17:29…</span>
<span class="t d w" style="left:534.4px;top:599.3px;transform:scaleX(1.132);">39.963</span>
<span class="t d w" style="left:609.7px;top:599.3px;transform:scaleX(1.132);">0.317</span>
<span class="t d w" style="left:686.1px;top:599.3px;transform:scaleX(1.132);">17</span>
<span class="t d w" style="left:839.1px;top:599.3px;transform:scaleX(1.037);">17:29…</span>
<span class="t d w" style="left:913.1px;top:599.3px;transform:scaleX(1.132);">39.948</span>
<span class="t d w" style="left:989.4px;top:599.3px;transform:scaleX(1.132);">0.503</span>
<span class="t d w" style="left:1064.8px;top:599.3px;transform:scaleX(1.132);">15</span>
<span class="t d w" style="left:5.6px;top:622.4px;transform:scaleX(1.132);">46973</span>
<span class="t d w" style="left:82.2px;top:622.4px;transform:scaleX(1.037);">17:29…</span>
<span class="t d w" style="left:156.1px;top:622.4px;transform:scaleX(1.132);">40.360</span>
<span class="t d w" style="left:231.0px;top:622.4px;transform:scaleX(1.132);">0.253</span>
<span class="t d w" style="left:306.1px;top:622.4px;transform:scaleX(1.132);">16</span>
<span class="t d w" style="left:459.2px;top:622.4px;transform:scaleX(1.037);">17:29…</span>
<span class="t d w" style="left:534.4px;top:622.4px;transform:scaleX(1.132);">40.302</span>
<span class="t d w" style="left:609.7px;top:622.4px;transform:scaleX(1.132);">0.321</span>
<span class="t d w" style="left:686.1px;top:622.4px;transform:scaleX(1.132);">17</span>
<span class="t d w" style="left:839.1px;top:622.4px;transform:scaleX(1.037);">17:29…</span>
<span class="t d w" style="left:913.1px;top:622.4px;transform:scaleX(1.132);">39.915</span>
<span class="t d w" style="left:989.4px;top:622.4px;transform:scaleX(1.166);">0.511</span>
<span class="t d w" style="left:1064.8px;top:622.4px;transform:scaleX(1.132);">15</span>
<span class="t d" style="left:5.6px;top:645.5px;transform:scaleX(1.132);">46974</span>
<span class="t d" style="left:82.2px;top:645.5px;transform:scaleX(1.037);">17:29…</span>
<span class="t d" style="left:156.1px;top:645.5px;transform:scaleX(1.132);">39.849</span>
<span class="t d" style="left:231.0px;top:645.5px;transform:scaleX(1.132);">0.249</span>
<span class="t d" style="left:306.1px;top:645.5px;transform:scaleX(1.132);">16</span>
<span class="t d" style="left:459.2px;top:645.5px;transform:scaleX(1.037);">17:29…</span>
<span class="t d" style="left:534.4px;top:645.5px;transform:scaleX(1.132);">39.963</span>
<span class="t d" style="left:609.7px;top:645.5px;transform:scaleX(1.132);">0.321</span>
<span class="t d" style="left:686.1px;top:645.5px;transform:scaleX(1.132);">17</span>
<span class="t d" style="left:839.1px;top:645.5px;transform:scaleX(1.037);">17:29…</span>
<span class="t d" style="left:913.1px;top:645.5px;transform:scaleX(1.132);">39.973</span>
<span class="t d" style="left:989.4px;top:645.5px;transform:scaleX(1.132);">0.517</span>
<span class="t d" style="left:1064.8px;top:645.5px;transform:scaleX(1.132);">15</span>
<span class="t d" style="left:5.6px;top:668.6px;transform:scaleX(1.132);">46975</span>
<span class="t d" style="left:82.2px;top:668.6px;transform:scaleX(1.037);">17:29…</span>
<span class="t d" style="left:156.1px;top:668.6px;transform:scaleX(1.132);">39.308</span>
<span class="t d" style="left:231.0px;top:668.6px;transform:scaleX(1.132);">0.247</span>
<span class="t d" style="left:306.1px;top:668.6px;transform:scaleX(1.132);">16</span>
<span class="t d" style="left:459.2px;top:668.6px;transform:scaleX(1.037);">17:29…</span>
<span class="t d" style="left:534.4px;top:668.6px;transform:scaleX(1.132);">39.373</span>
<span class="t d" style="left:609.7px;top:668.6px;transform:scaleX(1.132);">0.321</span>
<span class="t d" style="left:686.1px;top:668.6px;transform:scaleX(1.132);">17</span>
<span class="t d" style="left:839.1px;top:668.6px;transform:scaleX(1.037);">17:29…</span>
<span class="t d" style="left:913.1px;top:668.6px;transform:scaleX(1.132);">39.913</span>
<span class="t d" style="left:989.4px;top:668.6px;transform:scaleX(1.132);">0.519</span>
<span class="t d" style="left:1064.8px;top:668.6px;transform:scaleX(1.132);">15</span>
<span class="t d" style="left:5.6px;top:691.7px;transform:scaleX(1.132);">46976</span>
<span class="t d" style="left:82.2px;top:691.7px;transform:scaleX(1.037);">17:29…</span>
<span class="t d" style="left:156.1px;top:691.7px;transform:scaleX(1.132);">39.730</span>
<span class="t d" style="left:231.0px;top:691.7px;transform:scaleX(1.132);">0.247</span>
<span class="t d" style="left:306.1px;top:691.7px;transform:scaleX(1.132);">16</span>
<span class="t d" style="left:459.2px;top:691.7px;transform:scaleX(1.037);">17:29…</span>
<span class="t d" style="left:534.4px;top:691.7px;transform:scaleX(1.132);">39.647</span>
<span class="t d" style="left:609.7px;top:691.7px;transform:scaleX(1.132);">0.321</span>
<span class="t d" style="left:686.1px;top:691.7px;transform:scaleX(1.132);">17</span>
<span class="t d" style="left:839.1px;top:691.7px;transform:scaleX(1.037);">17:29…</span>
<span class="t d" style="left:913.1px;top:691.7px;transform:scaleX(1.132);">39.682</span>
<span class="t d" style="left:989.4px;top:691.7px;transform:scaleX(1.132);">0.515</span>
<span class="t d" style="left:1064.8px;top:691.7px;transform:scaleX(1.132);">15</span>
<span class="t d" style="left:5.6px;top:714.8px;transform:scaleX(1.132);">46977</span>
<span class="t d" style="left:82.2px;top:714.8px;transform:scaleX(1.037);">17:29…</span>
<span class="t d" style="left:156.1px;top:714.8px;transform:scaleX(1.132);">39.777</span>
<span class="t d" style="left:231.0px;top:714.8px;transform:scaleX(1.132);">0.253</span>
<span class="t d" style="left:306.1px;top:714.8px;transform:scaleX(1.132);">16</span>
<span class="t d" style="left:459.2px;top:714.8px;transform:scaleX(1.037);">17:29…</span>
<span class="t d" style="left:534.4px;top:714.8px;transform:scaleX(1.132);">39.666</span>
<span class="t d" style="left:609.7px;top:714.8px;transform:scaleX(1.132);">0.321</span>
<span class="t d" style="left:686.1px;top:714.8px;transform:scaleX(1.132);">17</span>
<span class="t d" style="left:839.1px;top:714.8px;transform:scaleX(1.037);">17:29…</span>
<span class="t d" style="left:913.1px;top:714.8px;transform:scaleX(1.132);">39.773</span>
<span class="t d" style="left:989.4px;top:714.8px;transform:scaleX(1.132);">0.513</span>
<span class="t d" style="left:1064.8px;top:714.8px;transform:scaleX(1.132);">15</span>
<span class="t d" style="left:5.6px;top:737.9px;transform:scaleX(1.132);">46978</span>
<span class="t d" style="left:82.2px;top:737.9px;transform:scaleX(1.037);">17:29…</span>
<span class="t d" style="left:156.1px;top:737.9px;transform:scaleX(1.132);">40.131</span>
<span class="t d" style="left:231.0px;top:737.9px;transform:scaleX(1.132);">0.253</span>
<span class="t d" style="left:306.1px;top:737.9px;transform:scaleX(1.132);">16</span>
<span class="t d" style="left:459.2px;top:737.9px;transform:scaleX(1.037);">17:29…</span>
<span class="t d" style="left:534.4px;top:737.9px;transform:scaleX(1.132);">40.208</span>
<span class="t d" style="left:609.7px;top:737.9px;transform:scaleX(1.132);">0.321</span>
<span class="t d" style="left:686.1px;top:737.9px;transform:scaleX(1.132);">17</span>
<span class="t d" style="left:839.1px;top:737.9px;transform:scaleX(1.037);">17:29…</span>
<span class="t d" style="left:913.1px;top:737.9px;transform:scaleX(1.160);">39.711</span>
<span class="t d" style="left:989.4px;top:737.9px;transform:scaleX(1.132);">0.492</span>
<span class="t d" style="left:1064.8px;top:737.9px;transform:scaleX(1.132);">15</span>
<span class="t d" style="left:5.6px;top:761.0px;transform:scaleX(1.132);">46979</span>
<span class="t d" style="left:82.2px;top:761.0px;transform:scaleX(1.037);">17:29…</span>
<span class="t d" style="left:156.1px;top:761.0px;transform:scaleX(1.132);">39.952</span>
<span class="t d" style="left:231.0px;top:761.0px;transform:scaleX(1.132);">0.251</span>
<span class="t d" style="left:306.1px;top:761.0px;transform:scaleX(1.132);">16</span>
<span class="t d" style="left:459.2px;top:761.0px;transform:scaleX(1.037);">17:29…</span>
<span class="t d" style="left:534.4px;top:761.0px;transform:scaleX(1.132);">39.995</span>
<span class="t d" style="left:609.7px;top:761.0px;transform:scaleX(1.132);">0.321</span>
<span class="t d" style="left:686.1px;top:761.0px;transform:scaleX(1.132);">17</span>
<span class="t d" style="left:839.1px;top:761.0px;transform:scaleX(1.037);">17:29…</span>
<span class="t d" style="left:913.1px;top:761.0px;transform:scaleX(1.132);">39.915</span>
<span class="t d" style="left:989.4px;top:761.0px;transform:scaleX(1.132);">0.482</span>
<span class="t d" style="left:1064.8px;top:761.0px;transform:scaleX(1.132);">15</span>
<div class="b" style="left:1.60px;top:805.00px;width:1241.00px;height:13.20px;background:#fbfbfb;"></div>
<div class="b" style="left:615.90px;top:807.40px;width:8.20px;height:8.20px;background:#8b8b8b;border-radius:50%;"></div>
<div class="b" style="left:0.00px;top:818.20px;width:1240.40px;height:280.00px;background:#6ea8e0;"></div>
<div class="b" style="left:0.00px;top:818.20px;width:1240.40px;height:1.20px;background:#9cc6ee;"></div>
<div class="b" style="left:0.00px;top:819.40px;width:2.50px;height:277.00px;background:#a4cdf3;"></div>
<div class="b" style="left:2.50px;top:820.00px;width:1235.60px;height:274.60px;background:#ffffff;"></div>
<div class="b" style="left:112.40px;top:825.20px;width:1.70px;height:15.30px;background:#4a4a4a;"></div>
<div class="b" style="left:148.50px;top:825.20px;width:1.70px;height:15.30px;background:#4a4a4a;"></div>
<div class="b" style="left:238.10px;top:825.20px;width:1.70px;height:15.30px;background:#4a4a4a;"></div>
<div class="b" style="left:311.90px;top:825.20px;width:1.70px;height:15.30px;background:#4a4a4a;"></div>
<div class="b" style="left:452.00px;top:825.20px;width:1.70px;height:15.30px;background:#4a4a4a;"></div>
<div class="b" style="left:535.80px;top:825.20px;width:1.70px;height:15.30px;background:#4a4a4a;"></div>
<div class="b" style="left:605.10px;top:825.20px;width:1.70px;height:15.30px;background:#4a4a4a;"></div>
<div class="b" style="left:745.10px;top:825.20px;width:1.70px;height:15.30px;background:#4a4a4a;"></div>
<div class="b" style="left:823.40px;top:825.20px;width:1.70px;height:15.30px;background:#4a4a4a;"></div>
<div class="b" style="left:897.10px;top:825.20px;width:1.70px;height:15.30px;background:#4a4a4a;"></div>
<div class="b" style="left:1213.80px;top:825.20px;width:1.70px;height:15.30px;background:#4a4a4a;"></div>
<span class="t h" style="left:9.4px;top:821.5px;transform:scaleX(1.068);">Category</span>
<span class="t h" style="left:119.3px;top:821.5px;transform:scaleX(1.131);">#</span>
<span class="t h" style="left:154.9px;top:821.5px;transform:scaleX(0.961);">Speed</span>
<span class="t h" style="left:245.2px;top:821.5px;transform:scaleX(1.062);">+−</span>
<span class="t h" style="left:319.2px;top:821.5px;transform:scaleX(1.032);">Time</span>
<span class="t h" style="left:458.4px;top:821.5px;transform:scaleX(0.961);">Speed</span>
<span class="t h" style="left:542.9px;top:821.5px;transform:scaleX(1.062);">+−</span>
<span class="t h" style="left:612.4px;top:821.5px;transform:scaleX(1.032);">Time</span>
<span class="t h" style="left:751.5px;top:821.5px;transform:scaleX(0.961);">Speed</span>
<span class="t h" style="left:830.5px;top:821.5px;transform:scaleX(1.062);">+−</span>
<span class="t h" style="left:904.4px;top:821.5px;transform:scaleX(1.032);">Time</span>
<span class="t db" style="left:6.4px;top:845.6px;transform:scaleX(1.032);">2 sec</span>
<span class="t db" style="left:115.5px;top:845.6px;transform:scaleX(1.098);">1</span>
<span class="t db" style="left:151.6px;top:845.6px;transform:scaleX(1.098);">40.534</span>
<span class="t db" style="left:241.2px;top:845.6px;transform:scaleX(1.122);">0.118</span>
<span class="t db" style="left:315.0px;top:845.6px;transform:scaleX(1.077);">16:57:52.700</span>
<span class="t db" style="left:455.1px;top:845.6px;transform:scaleX(1.098);">40.542</span>
<span class="t db" style="left:538.9px;top:845.6px;transform:scaleX(1.098);">0.146</span>
<span class="t db" style="left:608.2px;top:845.6px;transform:scaleX(1.077);">16:57:52.800</span>
<span class="t db" style="left:748.2px;top:845.6px;transform:scaleX(1.098);">40.450</span>
<span class="t db" style="left:826.5px;top:845.6px;transform:scaleX(1.098);">0.231</span>
<span class="t db" style="left:900.2px;top:845.6px;transform:scaleX(1.077);">16:57:52.600</span>
<div class="b" style="left:4.70px;top:868.30px;width:1209.20px;height:21.00px;background:#0220d6;"></div>
<div class="b" style="left:112.10px;top:868.30px;width:2.10px;height:21.00px;background:rgba(255,255,255,0.78);"></div>
<div class="b" style="left:148.20px;top:868.30px;width:2.10px;height:21.00px;background:rgba(255,255,255,0.78);"></div>
<div class="b" style="left:237.80px;top:868.30px;width:2.10px;height:21.00px;background:rgba(255,255,255,0.78);"></div>
<div class="b" style="left:311.60px;top:868.30px;width:2.10px;height:21.00px;background:rgba(255,255,255,0.78);"></div>
<div class="b" style="left:451.70px;top:868.30px;width:2.10px;height:21.00px;background:rgba(255,255,255,0.78);"></div>
<div class="b" style="left:535.50px;top:868.30px;width:2.10px;height:21.00px;background:rgba(255,255,255,0.78);"></div>
<div class="b" style="left:604.80px;top:868.30px;width:2.10px;height:21.00px;background:rgba(255,255,255,0.78);"></div>
<div class="b" style="left:744.80px;top:868.30px;width:2.10px;height:21.00px;background:rgba(255,255,255,0.78);"></div>
<div class="b" style="left:823.10px;top:868.30px;width:2.10px;height:21.00px;background:rgba(255,255,255,0.78);"></div>
<div class="b" style="left:896.80px;top:868.30px;width:2.10px;height:21.00px;background:rgba(255,255,255,0.78);"></div>
<span class="t d w" style="left:6.8px;top:868.7px;transform:scaleX(1.044);">2 sec</span>
<span class="t d w" style="left:115.5px;top:868.7px;transform:scaleX(1.132);">2</span>
<span class="t d w" style="left:151.6px;top:868.7px;transform:scaleX(1.132);">40.275</span>
<span class="t d w" style="left:241.2px;top:868.7px;transform:scaleX(1.166);">0.115</span>
<span class="t d w" style="left:315.0px;top:868.7px;transform:scaleX(1.132);">17:29:56.200</span>
<span class="t d w" style="left:455.1px;top:868.7px;transform:scaleX(1.132);">40.263</span>
<span class="t d w" style="left:538.9px;top:868.7px;transform:scaleX(1.132);">0.141</span>
<span class="t d w" style="left:608.2px;top:868.7px;transform:scaleX(1.132);">17:29:56.200</span>
<span class="t d w" style="left:748.2px;top:868.7px;transform:scaleX(1.132);">40.155</span>
<span class="t d w" style="left:826.5px;top:868.7px;transform:scaleX(1.132);">0.231</span>
<span class="t d w" style="left:900.2px;top:868.7px;transform:scaleX(1.132);">17:29:56.000</span>
<div class="b" style="left:4.70px;top:891.40px;width:1209.20px;height:21.00px;background:#ffff00;"></div>
<div class="b" style="left:112.10px;top:891.40px;width:2.10px;height:21.00px;background:rgba(255,255,255,0.55);"></div>
<div class="b" style="left:148.20px;top:891.40px;width:2.10px;height:21.00px;background:rgba(255,255,255,0.55);"></div>
<div class="b" style="left:237.80px;top:891.40px;width:2.10px;height:21.00px;background:rgba(255,255,255,0.55);"></div>
<div class="b" style="left:311.60px;top:891.40px;width:2.10px;height:21.00px;background:rgba(255,255,255,0.55);"></div>
<div class="b" style="left:451.70px;top:891.40px;width:2.10px;height:21.00px;background:rgba(255,255,255,0.55);"></div>
<div class="b" style="left:535.50px;top:891.40px;width:2.10px;height:21.00px;background:rgba(255,255,255,0.55);"></div>
<div class="b" style="left:604.80px;top:891.40px;width:2.10px;height:21.00px;background:rgba(255,255,255,0.55);"></div>
<div class="b" style="left:744.80px;top:891.40px;width:2.10px;height:21.00px;background:rgba(255,255,255,0.55);"></div>
<div class="b" style="left:823.10px;top:891.40px;width:2.10px;height:21.00px;background:rgba(255,255,255,0.55);"></div>
<div class="b" style="left:896.80px;top:891.40px;width:2.10px;height:21.00px;background:rgba(255,255,255,0.55);"></div>
<span class="t d" style="left:6.8px;top:891.8px;transform:scaleX(1.044);">2 sec</span>
<span class="t d" style="left:115.5px;top:891.8px;transform:scaleX(1.132);">3</span>
<span class="t d" style="left:151.6px;top:891.8px;transform:scaleX(1.132);">39.776</span>
<span class="t d" style="left:241.2px;top:891.8px;transform:scaleX(1.166);">0.119</span>
<span class="t d" style="left:315.0px;top:891.8px;transform:scaleX(1.132);">17:56:15.200</span>
<span class="t d" style="left:455.1px;top:891.8px;transform:scaleX(1.132);">39.760</span>
<span class="t d" style="left:538.9px;top:891.8px;transform:scaleX(1.132);">0.164</span>
<span class="t d" style="left:608.2px;top:891.8px;transform:scaleX(1.132);">17:34:09.400</span>
<span class="t d" style="left:748.2px;top:891.8px;transform:scaleX(1.132);">39.748</span>
<span class="t d" style="left:826.5px;top:891.8px;transform:scaleX(1.132);">0.206</span>
<span class="t d" style="left:900.2px;top:891.8px;transform:scaleX(1.132);">17:34:09.100</span>
<div class="b" style="left:4.70px;top:914.50px;width:1209.20px;height:21.00px;background:#ffff00;"></div>
<div class="b" style="left:112.10px;top:914.50px;width:2.10px;height:21.00px;background:rgba(255,255,255,0.55);"></div>
<div class="b" style="left:148.20px;top:914.50px;width:2.10px;height:21.00px;background:rgba(255,255,255,0.55);"></div>
<div class="b" style="left:237.80px;top:914.50px;width:2.10px;height:21.00px;background:rgba(255,255,255,0.55);"></div>
<div class="b" style="left:311.60px;top:914.50px;width:2.10px;height:21.00px;background:rgba(255,255,255,0.55);"></div>
<div class="b" style="left:451.70px;top:914.50px;width:2.10px;height:21.00px;background:rgba(255,255,255,0.55);"></div>
<div class="b" style="left:535.50px;top:914.50px;width:2.10px;height:21.00px;background:rgba(255,255,255,0.55);"></div>
<div class="b" style="left:604.80px;top:914.50px;width:2.10px;height:21.00px;background:rgba(255,255,255,0.55);"></div>
<div class="b" style="left:744.80px;top:914.50px;width:2.10px;height:21.00px;background:rgba(255,255,255,0.55);"></div>
<div class="b" style="left:823.10px;top:914.50px;width:2.10px;height:21.00px;background:rgba(255,255,255,0.55);"></div>
<div class="b" style="left:896.80px;top:914.50px;width:2.10px;height:21.00px;background:rgba(255,255,255,0.55);"></div>
<span class="t d" style="left:6.8px;top:914.9px;transform:scaleX(1.044);">2 sec</span>
<span class="t d" style="left:115.5px;top:914.9px;transform:scaleX(1.132);">4</span>
<span class="t d" style="left:151.6px;top:914.9px;transform:scaleX(1.132);">39.770</span>
<span class="t d" style="left:241.2px;top:914.9px;transform:scaleX(1.132);">0.120</span>
<span class="t d" style="left:315.0px;top:914.9px;transform:scaleX(1.132);">17:34:09.400</span>
<span class="t d" style="left:455.1px;top:914.9px;transform:scaleX(1.132);">39.748</span>
<span class="t d" style="left:538.9px;top:914.9px;transform:scaleX(1.132);">0.170</span>
<span class="t d" style="left:608.2px;top:914.9px;transform:scaleX(1.132);">17:56:15.200</span>
<span class="t d" style="left:748.2px;top:914.9px;transform:scaleX(1.132);">39.730</span>
<span class="t d" style="left:826.5px;top:914.9px;transform:scaleX(1.132);">0.203</span>
<span class="t d" style="left:900.2px;top:914.9px;transform:scaleX(1.132);">17:56:02.700</span>
<span class="t d" style="left:6.8px;top:938.0px;transform:scaleX(1.044);">2 sec</span>
<span class="t d" style="left:115.5px;top:938.0px;transform:scaleX(1.132);">5</span>
<span class="t d" style="left:151.6px;top:938.0px;transform:scaleX(1.132);">39.572</span>
<span class="t d" style="left:241.2px;top:938.0px;transform:scaleX(1.132);">0.109</span>
<span class="t d" style="left:315.0px;top:938.0px;transform:scaleX(1.132);">16:48:02.000</span>
<span class="t d" style="left:455.1px;top:938.0px;transform:scaleX(1.132);">39.559</span>
<span class="t d" style="left:538.9px;top:938.0px;transform:scaleX(1.132);">0.136</span>
<span class="t d" style="left:608.2px;top:938.0px;transform:scaleX(1.132);">16:48:02.000</span>
<span class="t d" style="left:748.2px;top:938.0px;transform:scaleX(1.132);">39.512</span>
<span class="t d" style="left:826.5px;top:938.0px;transform:scaleX(1.132);">0.212</span>
<span class="t d" style="left:900.2px;top:938.0px;transform:scaleX(1.132);">16:48:01.900</span>
<div class="b" style="left:4.70px;top:960.70px;width:1209.20px;height:21.00px;background:#ffff00;"></div>
<div class="b" style="left:112.10px;top:960.70px;width:2.10px;height:21.00px;background:rgba(255,255,255,0.55);"></div>
<div class="b" style="left:148.20px;top:960.70px;width:2.10px;height:21.00px;background:rgba(255,255,255,0.55);"></div>
<div class="b" style="left:237.80px;top:960.70px;width:2.10px;height:21.00px;background:rgba(255,255,255,0.55);"></div>
<div class="b" style="left:311.60px;top:960.70px;width:2.10px;height:21.00px;background:rgba(255,255,255,0.55);"></div>
<div class="b" style="left:451.70px;top:960.70px;width:2.10px;height:21.00px;background:rgba(255,255,255,0.55);"></div>
<div class="b" style="left:535.50px;top:960.70px;width:2.10px;height:21.00px;background:rgba(255,255,255,0.55);"></div>
<div class="b" style="left:604.80px;top:960.70px;width:2.10px;height:21.00px;background:rgba(255,255,255,0.55);"></div>
<div class="b" style="left:744.80px;top:960.70px;width:2.10px;height:21.00px;background:rgba(255,255,255,0.55);"></div>
<div class="b" style="left:823.10px;top:960.70px;width:2.10px;height:21.00px;background:rgba(255,255,255,0.55);"></div>
<div class="b" style="left:896.80px;top:960.70px;width:2.10px;height:21.00px;background:rgba(255,255,255,0.55);"></div>
<span class="t d" style="left:6.8px;top:961.1px;transform:scaleX(1.061);">10 sec</span>
<span class="t d" style="left:115.5px;top:961.1px;transform:scaleX(1.132);">1</span>
<span class="t d" style="left:151.6px;top:961.1px;transform:scaleX(1.132);">39.820</span>
<span class="t d" style="left:241.2px;top:961.1px;transform:scaleX(1.132);">0.053</span>
<span class="t d" style="left:315.0px;top:961.1px;transform:scaleX(1.132);">16:57:53.600</span>
<span class="t d" style="left:455.1px;top:961.1px;transform:scaleX(1.132);">39.825</span>
<span class="t d" style="left:538.9px;top:961.1px;transform:scaleX(1.132);">0.065</span>
<span class="t d" style="left:608.2px;top:961.1px;transform:scaleX(1.132);">16:57:53.600</span>
<span class="t d" style="left:748.2px;top:961.1px;transform:scaleX(1.132);">39.766</span>
<span class="t d" style="left:826.5px;top:961.1px;transform:scaleX(1.132);">0.100</span>
<span class="t d" style="left:900.2px;top:961.1px;transform:scaleX(1.132);">16:57:55.000</span>
<span class="t d" style="left:6.8px;top:984.2px;transform:scaleX(1.061);">10 sec</span>
<span class="t d" style="left:115.5px;top:984.2px;transform:scaleX(1.132);">2</span>
<span class="t d" style="left:151.6px;top:984.2px;transform:scaleX(1.132);">39.030</span>
<span class="t d" style="left:241.2px;top:984.2px;transform:scaleX(1.132);">0.050</span>
<span class="t d" style="left:315.0px;top:984.2px;transform:scaleX(1.132);">17:30:00.600</span>
<span class="t d" style="left:455.1px;top:984.2px;transform:scaleX(1.132);">39.035</span>
<span class="t d" style="left:538.9px;top:984.2px;transform:scaleX(1.132);">0.063</span>
<span class="t d" style="left:608.2px;top:984.2px;transform:scaleX(1.132);">17:30:00.600</span>
<span class="t d" style="left:748.2px;top:984.2px;transform:scaleX(1.132);">39.023</span>
<span class="t d" style="left:826.5px;top:984.2px;transform:scaleX(1.132);">0.102</span>
<span class="t d" style="left:900.2px;top:984.2px;transform:scaleX(1.132);">17:30:00.700</span>
<span class="t d" style="left:6.8px;top:1007.3px;transform:scaleX(1.061);">10 sec</span>
<span class="t d" style="left:115.5px;top:1007.3px;transform:scaleX(1.132);">3</span>
<span class="t d" style="left:151.6px;top:1007.3px;transform:scaleX(1.132);">38.881</span>
<span class="t d" style="left:241.2px;top:1007.3px;transform:scaleX(1.132);">0.053</span>
<span class="t d" style="left:315.0px;top:1007.3px;transform:scaleX(1.132);">17:34:13.300</span>
<span class="t d" style="left:455.1px;top:1007.3px;transform:scaleX(1.132);">38.887</span>
<span class="t d" style="left:538.9px;top:1007.3px;transform:scaleX(1.132);">0.072</span>
<span class="t d" style="left:608.2px;top:1007.3px;transform:scaleX(1.132);">17:34:13.400</span>
<span class="t d" style="left:748.2px;top:1007.3px;transform:scaleX(1.132);">38.882</span>
<span class="t d" style="left:826.5px;top:1007.3px;transform:scaleX(1.132);">0.088</span>
<span class="t d" style="left:900.2px;top:1007.3px;transform:scaleX(1.132);">17:34:13.500</span>
<span class="t d" style="left:6.8px;top:1030.4px;transform:scaleX(1.061);">10 sec</span>
<span class="t d" style="left:115.5px;top:1030.4px;transform:scaleX(1.132);">4</span>
<span class="t d" style="left:151.6px;top:1030.4px;transform:scaleX(1.132);">38.594</span>
<span class="t d" style="left:241.2px;top:1030.4px;transform:scaleX(1.132);">0.054</span>
<span class="t d" style="left:315.0px;top:1030.4px;transform:scaleX(1.132);">17:26:57.500</span>
<span class="t d" style="left:455.1px;top:1030.4px;transform:scaleX(1.132);">38.573</span>
<span class="t d" style="left:538.9px;top:1030.4px;transform:scaleX(1.132);">0.065</span>
<span class="t d" style="left:608.2px;top:1030.4px;transform:scaleX(1.132);">17:26:57.500</span>
<span class="t d" style="left:748.2px;top:1030.4px;transform:scaleX(1.132);">38.577</span>
<span class="t d" style="left:826.5px;top:1030.4px;transform:scaleX(1.132);">0.095</span>
<span class="t d" style="left:900.2px;top:1030.4px;transform:scaleX(1.132);">17:26:57.800</span>
<div class="b" style="left:4.70px;top:1053.10px;width:1209.20px;height:21.00px;background:#ffff00;"></div>
<div class="b" style="left:112.10px;top:1053.10px;width:2.10px;height:21.00px;background:rgba(255,255,255,0.55);"></div>
<div class="b" style="left:148.20px;top:1053.10px;width:2.10px;height:21.00px;background:rgba(255,255,255,0.55);"></div>
<div class="b" style="left:237.80px;top:1053.10px;width:2.10px;height:21.00px;background:rgba(255,255,255,0.55);"></div>
<div class="b" style="left:311.60px;top:1053.10px;width:2.10px;height:21.00px;background:rgba(255,255,255,0.55);"></div>
<div class="b" style="left:451.70px;top:1053.10px;width:2.10px;height:21.00px;background:rgba(255,255,255,0.55);"></div>
<div class="b" style="left:535.50px;top:1053.10px;width:2.10px;height:21.00px;background:rgba(255,255,255,0.55);"></div>
<div class="b" style="left:604.80px;top:1053.10px;width:2.10px;height:21.00px;background:rgba(255,255,255,0.55);"></div>
<div class="b" style="left:744.80px;top:1053.10px;width:2.10px;height:21.00px;background:rgba(255,255,255,0.55);"></div>
<div class="b" style="left:823.10px;top:1053.10px;width:2.10px;height:21.00px;background:rgba(255,255,255,0.55);"></div>
<div class="b" style="left:896.80px;top:1053.10px;width:2.10px;height:21.00px;background:rgba(255,255,255,0.55);"></div>
<span class="t d" style="left:6.8px;top:1053.5px;transform:scaleX(1.061);">10 sec</span>
<span class="t d" style="left:115.5px;top:1053.5px;transform:scaleX(1.132);">5</span>
<span class="t d" style="left:151.6px;top:1053.5px;transform:scaleX(1.132);">38.401</span>
<span class="t d" style="left:241.2px;top:1053.5px;transform:scaleX(1.132);">0.057</span>
<span class="t d" style="left:315.0px;top:1053.5px;transform:scaleX(1.132);">17:15:19.900</span>
<span class="t d" style="left:455.1px;top:1053.5px;transform:scaleX(1.132);">38.404</span>
<span class="t d" style="left:538.9px;top:1053.5px;transform:scaleX(1.132);">0.069</span>
<span class="t d" style="left:608.2px;top:1053.5px;transform:scaleX(1.132);">17:15:19.900</span>
<span class="t d" style="left:748.2px;top:1053.5px;transform:scaleX(1.132);">38.378</span>
<span class="t d" style="left:826.5px;top:1053.5px;transform:scaleX(1.132);">0.095</span>
<span class="t d" style="left:900.2px;top:1053.5px;transform:scaleX(1.132);">16:48:05.800</span>
<span class="t db" style="left:6.4px;top:1076.6px;transform:scaleX(1.070);">5x10 sec</span>
<span class="t db" style="left:115.5px;top:1076.6px;transform:scaleX(1.098);">1</span>
<span class="t db" style="left:151.6px;top:1076.6px;transform:scaleX(1.098);">38.945</span>
<span class="t db" style="left:241.2px;top:1076.6px;transform:scaleX(1.098);">0.052</span>
<span class="t db" style="left:455.1px;top:1076.6px;transform:scaleX(1.098);">38.945</span>
<span class="t db" style="left:538.9px;top:1076.6px;transform:scaleX(1.098);">0.066</span>
<span class="t db" style="left:748.2px;top:1076.6px;transform:scaleX(1.098);">38.925</span>
<span class="t db" style="left:826.5px;top:1076.6px;transform:scaleX(1.098);">0.095</span>
<div class="b" style="left:2.50px;top:1094.50px;width:1235.60px;height:3.70px;background:#6ea8e0;"></div>
<div class="b" style="left:2.50px;top:1094.50px;width:1235.60px;height:1.60px;background:#86b9ea;"></div>
<div class="b" style="left:1215.20px;top:845.00px;width:22.30px;height:249.50px;background:#fafafa;border-left:1px solid #e3e3e3;box-sizing:border-box;"></div>
<div class="b" style="left:1221.00px;top:847.00px;width:11.30px;height:59.60px;background:#8d8d8d;border-radius:5.7px;"></div>
<div class="b" style="left:1242.20px;top:37.00px;width:13.20px;height:1063.00px;background:linear-gradient(90deg,#e6e6e6,#efefef 40%,#f8f8f8);"></div>
<div class="b" style="left:1242.40px;top:562.00px;width:12.80px;height:14.40px;background:#fafafa;border-top:1px solid #b5b5b5;border-bottom:1px solid #b5b5b5;box-sizing:border-box;"></div>
<div class="b" style="left:1244.70px;top:565.50px;width:8.20px;height:8.20px;background:#8b8b8b;border-radius:50%;"></div>
<div class="b" style="left:1255.20px;top:37.00px;width:681.80px;height:1063.00px;background:#ffffff;"></div>
<div class="b" style="left:1934.60px;top:37.00px;width:2.40px;height:1063.00px;background:#ececec;"></div>
<div class="b" style="left:1255.20px;top:348.00px;width:679.40px;height:13.00px;background:#fafafa;"></div>
<div class="b" style="left:1590.40px;top:350.40px;width:8.20px;height:8.20px;background:#8b8b8b;border-radius:50%;"></div>
<div class="b" style="left:1255.20px;top:865.40px;width:679.40px;height:13.00px;background:#fcfcfc;"></div>
<div class="b" style="left:1255.20px;top:1079.00px;width:679.40px;height:20.50px;background:#fafafa;"></div>
<div class="b" style="left:1680.00px;top:1084.80px;width:26.00px;height:11.20px;background:#8e8e8e;border-radius:5.6px;"></div>
<svg class="b" style="left:0;top:0" width="1937" height="1125" viewBox="0 0 1937 1125">
<rect x="1477.5" y="363" width="235" height="501" fill="#ffffcc"/>
<rect x="1477.5" y="879.5" width="235" height="198.0999999999999" fill="#ffffcc"/>
<line x1="1256" y1="398.8" x2="1934" y2="398.8" stroke="#c6c6c6" stroke-width="1.5"/>
<line x1="1256" y1="457.0" x2="1934" y2="457.0" stroke="#c6c6c6" stroke-width="1.5" stroke-dasharray="27.6 12.7"/>
<line x1="1256" y1="515.2" x2="1934" y2="515.2" stroke="#c6c6c6" stroke-width="1.5"/>
<line x1="1256" y1="573.4" x2="1934" y2="573.4" stroke="#c6c6c6" stroke-width="1.5" stroke-dasharray="27.6 12.7"/>
<line x1="1256" y1="631.6" x2="1934" y2="631.6" stroke="#c6c6c6" stroke-width="1.5"/>
<line x1="1256" y1="689.8" x2="1934" y2="689.8" stroke="#c6c6c6" stroke-width="1.5" stroke-dasharray="27.6 12.7"/>
<line x1="1256" y1="748.0" x2="1934" y2="748.0" stroke="#c6c6c6" stroke-width="1.5"/>
<line x1="1256" y1="806.2" x2="1934" y2="806.2" stroke="#c6c6c6" stroke-width="1.5" stroke-dasharray="27.6 12.7"/>
<line x1="1256" y1="1046.0" x2="1934" y2="1046.0" stroke="#c6c6c6" stroke-width="1.5" stroke-dasharray="27.6 12.7"/>
<line x1="1256" y1="1014.1" x2="1934" y2="1014.1" stroke="#c6c6c6" stroke-width="1.5"/>
<line x1="1256" y1="982.2" x2="1934" y2="982.2" stroke="#c6c6c6" stroke-width="1.5" stroke-dasharray="27.6 12.7"/>
<line x1="1256" y1="950.3" x2="1934" y2="950.3" stroke="#c6c6c6" stroke-width="1.5"/>
<line x1="1256" y1="918.4" x2="1934" y2="918.4" stroke="#c6c6c6" stroke-width="1.5" stroke-dasharray="27.6 12.7"/>
<line x1="1477.7" y1="363" x2="1477.7" y2="864" stroke="#858578" stroke-width="1.5"/>
<line x1="1712.4" y1="363" x2="1712.4" y2="864" stroke="#858578" stroke-width="1.5"/>
<line x1="1477.7" y1="879.5" x2="1477.7" y2="1077.6" stroke="#858578" stroke-width="1.5"/>
<line x1="1712.4" y1="879.5" x2="1712.4" y2="1077.6" stroke="#858578" stroke-width="1.5"/>
<line x1="1255.4" y1="362" x2="1934.3" y2="362" stroke="#1c1c1c" stroke-width="2.0"/>
<line x1="1255.4" y1="864.6" x2="1934.3" y2="864.6" stroke="#1c1c1c" stroke-width="1.8"/>
<line x1="1255.4" y1="878.8" x2="1934.3" y2="878.8" stroke="#1c1c1c" stroke-width="1.7"/>
<line x1="1255.4" y1="1078.1" x2="1934.3" y2="1078.1" stroke="#1c1c1c" stroke-width="1.7"/>
<text transform="translate(1284.6,414.8) scale(1.07,1)" font-size="18.6" fill="#b9b9b9">40</text>
<text transform="translate(1284.6,473.0) scale(1.07,1)" font-size="18.6" fill="#b9b9b9">35</text>
<text transform="translate(1284.6,531.2) scale(1.07,1)" font-size="18.6" fill="#b9b9b9">30</text>
<text transform="translate(1284.6,589.4) scale(1.07,1)" font-size="18.6" fill="#b9b9b9">25</text>
<text transform="translate(1284.6,647.6) scale(1.07,1)" font-size="18.6" fill="#b9b9b9">20</text>
<text transform="translate(1284.6,705.8) scale(1.07,1)" font-size="18.6" fill="#b9b9b9">15</text>
<text transform="translate(1284.6,764.0) scale(1.07,1)" font-size="18.6" fill="#b9b9b9">10</text>
<text transform="translate(1284.6,822.2) scale(1.07,1)" font-size="18.6" fill="#b9b9b9">5</text>
<text transform="translate(1284.6,1062.0) scale(1.07,1)" font-size="18.6" fill="#b9b9b9">0.5</text>
<text transform="translate(1284.6,1030.1) scale(1.07,1)" font-size="18.6" fill="#b9b9b9">1.0</text>
<text transform="translate(1284.6,998.2) scale(1.07,1)" font-size="18.6" fill="#b9b9b9">1.5</text>
<text transform="translate(1284.6,966.3) scale(1.07,1)" font-size="18.6" fill="#b9b9b9">2.0</text>
<text transform="translate(1284.6,934.4) scale(1.07,1)" font-size="18.6" fill="#b9b9b9">2.5</text>
<g fill="none" stroke-linejoin="round" stroke-width="1.7" clip-path="url(#cpc)">
<polyline stroke="#1a1ad6" points="1254.8,421.9 1267.2,419.2 1279.6,417.8 1292.0,417.2 1304.3,412.5 1316.7,410.2 1329.1,413.4 1341.4,408.0 1353.8,403.3 1366.2,402.4 1378.5,402.0 1390.9,399.3 1403.3,399.9 1415.7,401.5 1428.0,399.4 1440.4,398.6 1452.8,400.8 1465.1,397.9 1477.5,397.4 1489.9,396.5 1502.2,396.3 1514.6,398.3 1527.0,397.4 1539.3,397.3 1551.7,396.9 1564.1,395.1 1576.5,394.8 1588.8,393.1 1601.2,394.6 1613.6,394.0 1625.9,393.1 1638.3,393.9 1650.7,395.2 1663.0,395.4 1675.4,394.3 1687.8,394.9 1700.2,398.9 1712.5,394.6 1724.9,400.6 1737.3,406.9 1749.6,401.9 1762.0,401.4 1774.4,397.3 1786.8,399.4 1799.1,402.0 1811.5,401.5 1823.9,405.1 1836.2,404.4 1848.6,401.7 1861.0,402.4 1873.3,406.6 1885.7,404.4 1898.1,406.2 1910.5,404.8 1922.8,407.5 1935.2,405.0"/>
<polyline stroke="#e8102a" points="1254.8,422.5 1267.2,420.1 1279.6,418.7 1292.0,417.4 1304.3,412.3 1316.7,407.5 1329.1,410.2 1341.4,406.9 1353.8,402.9 1366.2,402.4 1378.5,402.9 1390.9,399.3 1403.3,399.9 1415.7,401.6 1428.0,399.5 1440.4,397.9 1452.8,397.5 1465.1,398.0 1477.5,397.1 1489.9,397.3 1502.2,396.9 1514.6,398.6 1527.0,398.8 1539.3,397.1 1551.7,396.5 1564.1,394.7 1576.5,394.8 1588.8,393.8 1601.2,394.8 1613.6,393.0 1625.9,393.7 1638.3,392.1 1650.7,394.9 1663.0,396.7 1675.4,395.0 1687.8,394.6 1700.2,399.2 1712.5,395.3 1724.9,399.2 1737.3,406.1 1749.6,402.9 1762.0,402.7 1774.4,396.4 1786.8,398.9 1799.1,402.0 1811.5,402.0 1823.9,406.2 1836.2,404.8 1848.6,403.0 1861.0,400.8 1873.3,405.1 1885.7,406.2 1898.1,406.6 1910.5,404.8 1922.8,408.0 1935.2,404.4"/>
<polyline stroke="#22e822" points="1254.8,423.2 1267.2,421.0 1279.6,419.6 1292.0,417.6 1304.3,412.0 1316.7,408.4 1329.1,408.9 1341.4,404.4 1353.8,406.2 1366.2,407.6 1378.5,406.2 1390.9,399.5 1403.3,400.2 1415.7,405.7 1428.0,402.4 1440.4,397.1 1452.8,393.6 1465.1,392.8 1477.5,395.6 1489.9,400.2 1502.2,404.0 1514.6,401.5 1527.0,400.0 1539.3,399.0 1551.7,398.2 1564.1,397.8 1576.5,398.0 1588.8,396.8 1601.2,398.1 1613.6,395.9 1625.9,392.1 1638.3,392.9 1650.7,395.1 1663.0,394.9 1675.4,397.3 1687.8,396.2 1700.2,399.4 1712.5,399.8 1724.9,399.1 1737.3,399.8 1749.6,402.5 1762.0,401.4 1774.4,402.2 1786.8,399.8 1799.1,400.2 1811.5,400.2 1823.9,402.6 1836.2,404.8 1848.6,406.9 1861.0,404.8 1873.3,403.3 1885.7,405.7 1898.1,403.3 1910.5,404.4 1922.8,404.8 1935.2,408.4"/>
<polyline stroke="#22e822" stroke-width="1.9" points="1254.8,1038.6 1267.2,1039.9 1279.6,1041.3 1292.0,1041.3 1304.3,1042.8 1316.7,1042.8 1329.1,1046.2 1341.4,1048.9 1353.8,1048.9 1366.2,1048.9 1378.5,1048.9 1390.9,1048.5 1403.3,1047.1 1415.7,1045.6 1428.0,1042.9 1440.4,1041.9 1452.8,1043.1 1465.1,1043.9 1477.5,1045.3 1489.9,1046.3 1502.2,1046.1 1514.6,1044.3 1527.0,1042.4 1539.3,1041.5 1551.7,1043.6 1564.1,1044.3 1576.5,1044.1 1588.8,1045.4 1601.2,1045.9 1613.6,1046.4 1625.9,1046.6 1638.3,1046.0 1650.7,1045.8 1663.0,1045.9 1675.4,1046.3 1687.8,1046.0 1700.2,1045.8 1712.5,1045.3 1724.9,1044.9 1737.3,1044.8 1749.6,1045.0 1762.0,1045.2 1774.4,1046.5 1786.8,1047.1 1799.1,1047.5 1811.5,1048.9 1823.9,1048.9 1836.2,1048.9 1848.6,1050.4 1861.0,1050.4 1873.3,1050.4 1885.7,1050.4 1898.1,1050.4 1910.5,1050.4 1922.8,1050.4 1935.2,1050.4"/>
<polyline stroke="#e8102a" stroke-width="1.9" points="1254.8,1058.9 1267.2,1058.9 1279.6,1058.9 1292.0,1058.9 1304.3,1058.9 1316.7,1058.9 1329.1,1058.9 1341.4,1058.9 1353.8,1058.9 1366.2,1058.9 1378.5,1058.9 1390.9,1058.9 1403.3,1058.9 1415.7,1058.2 1428.0,1058.7 1440.4,1058.8 1452.8,1058.3 1465.1,1057.4 1477.5,1057.0 1489.9,1057.2 1502.2,1057.7 1514.6,1058.4 1527.0,1058.6 1539.3,1058.6 1551.7,1058.4 1564.1,1058.2 1576.5,1058.2 1588.8,1058.3 1601.2,1058.1 1613.6,1058.3 1625.9,1057.4 1638.3,1057.4 1650.7,1057.3 1663.0,1057.3 1675.4,1057.7 1687.8,1057.7 1700.2,1057.7 1712.5,1057.4 1724.9,1057.4 1737.3,1057.4 1749.6,1057.4 1762.0,1057.4 1774.4,1057.4 1786.8,1057.4 1799.1,1057.7 1811.5,1057.7 1823.9,1057.7 1836.2,1057.7 1848.6,1057.7 1861.0,1057.7 1873.3,1057.7 1885.7,1057.7 1898.1,1057.7 1910.5,1057.7 1922.8,1057.7 1935.2,1057.7"/>
<polyline stroke="#1a1ad6" stroke-width="1.9" points="1254.8,1063.2 1267.2,1063.2 1279.6,1063.2 1292.0,1063.2 1304.3,1063.2 1316.7,1063.2 1329.1,1063.2 1341.4,1063.2 1353.8,1063.2 1366.2,1063.2 1378.5,1063.2 1390.9,1063.2 1403.3,1063.2 1415.7,1062.7 1428.0,1062.7 1440.4,1062.4 1452.8,1061.8 1465.1,1061.6 1477.5,1061.5 1489.9,1061.6 1502.2,1061.2 1514.6,1061.3 1527.0,1061.6 1539.3,1061.3 1551.7,1060.9 1564.1,1061.1 1576.5,1061.1 1588.8,1061.2 1601.2,1061.1 1613.6,1061.5 1625.9,1061.6 1638.3,1061.8 1650.7,1061.5 1663.0,1061.5 1675.4,1061.8 1687.8,1061.9 1700.2,1061.8 1712.5,1061.8 1724.9,1062.0 1737.3,1062.1 1749.6,1062.1 1762.0,1061.8 1774.4,1061.8 1786.8,1061.9 1799.1,1063.3 1811.5,1063.3 1823.9,1063.3 1836.2,1063.3 1848.6,1063.3 1861.0,1063.3 1873.3,1063.3 1885.7,1061.9 1898.1,1063.3 1910.5,1063.3 1922.8,1063.3 1935.2,1063.3"/>
</g>
<defs><clipPath id="cpc"><rect x="1256" y="363" width="678" height="715"/></clipPath></defs>
<line x1="1266.8" y1="382.6" x2="1377.8" y2="382.6" stroke="#1e1e1e" stroke-width="1.7"/><line x1="1389.9" y1="382.6" x2="1392.0" y2="382.6" stroke="#1e1e1e" stroke-width="1.7"/><rect x="1378.6" y="374.6" width="8.9" height="17" fill="#e6e6e6"/><path d="M1388.5,373.1 V392.90000000000003 H1377.8" fill="none" stroke="#1a1a1a" stroke-width="1.9"/>
</svg>
<svg class="b" style="left:0;top:0" width="1937" height="360" viewBox="0 0 1937 360">
<defs><clipPath id="cpm"><rect x="1257" y="41" width="676" height="305.6"/></clipPath></defs>
<rect x="1256.2" y="40.1" width="677.3" height="307.2" fill="#fff" stroke="#161616" stroke-width="1.6"/>
<g clip-path="url(#cpm)" fill="none" stroke-linecap="round" stroke-linejoin="round">
<path stroke="#e0d0a2" stroke-width="1.5" d="M1491.0,229.0C1496.1,225.8 1511.4,216.1 1521.8,209.9M1521.8,209.9C1532.1,203.7 1542.5,197.8 1553.0,192.0M1553.0,192.0C1563.6,186.2 1574.2,180.6 1584.9,175.1M1584.9,175.1C1595.6,169.7 1606.4,164.5 1617.2,159.5M1617.2,159.5C1628.1,154.4 1639.1,149.6 1650.1,144.9M1650.1,144.9C1661.2,140.2 1672.3,135.8 1683.5,131.5M1683.5,131.5C1694.8,127.2 1706.1,123.1 1717.5,119.2M1717.5,119.2C1728.9,115.3 1746.3,109.9 1752.0,108.0M1491.0,229.0C1496.9,227.1 1514.5,221.5 1526.1,217.5M1526.1,217.5C1537.8,213.6 1549.3,209.4 1560.8,205.2M1560.8,205.2C1572.3,200.9 1583.7,196.5 1595.1,191.9M1595.1,191.9C1606.4,187.3 1617.7,182.6 1628.9,177.7M1628.9,177.7C1640.1,172.9 1651.3,167.8 1662.3,162.7M1662.3,162.7C1673.4,157.5 1684.4,152.2 1695.3,146.7M1695.3,146.7C1706.2,141.2 1717.1,135.6 1727.9,129.8M1727.9,129.8C1738.7,124.0 1754.6,115.0 1760.0,112.0M1491.0,229.0C1497.5,228.4 1517.4,227.1 1530.2,225.4M1530.2,225.4C1543.1,223.7 1555.7,221.5 1568.1,218.9M1568.1,218.9C1580.5,216.2 1592.6,213.1 1604.5,209.4M1604.5,209.4C1616.5,205.8 1628.1,201.6 1639.6,197.0M1639.6,197.0C1651.1,192.4 1662.3,187.3 1673.3,181.7M1673.3,181.7C1684.3,176.1 1695.0,170.0 1705.6,163.4M1705.6,163.4C1716.1,156.8 1726.4,149.7 1736.5,142.2M1736.5,142.2C1746.6,134.6 1761.1,122.0 1766.0,118.0M1491.0,229.0C1498.5,228.9 1521.3,229.5 1535.8,228.7M1535.8,228.7C1550.4,227.8 1564.7,226.2 1578.6,223.9M1578.6,223.9C1592.4,221.5 1606.0,218.4 1619.1,214.5M1619.1,214.5C1632.3,210.7 1645.1,206.0 1657.6,200.7M1657.6,200.7C1670.0,195.3 1682.1,189.2 1693.9,182.3M1693.9,182.3C1705.6,175.4 1717.0,167.8 1728.1,159.4M1728.1,159.4C1739.1,151.0 1749.8,141.8 1760.1,131.9M1760.1,131.9C1770.4,122.0 1785.0,105.3 1790.0,100.0M1491.0,229.0C1487.0,232.1 1475.0,241.6 1466.9,247.5M1466.9,247.5C1458.7,253.4 1450.4,258.9 1441.9,264.2M1441.9,264.2C1433.5,269.5 1424.9,274.4 1416.1,279.1M1416.1,279.1C1407.4,283.7 1398.6,288.1 1389.6,292.1M1389.6,292.1C1380.6,296.1 1371.4,299.9 1362.1,303.3M1362.1,303.3C1352.9,306.7 1343.5,309.9 1333.9,312.7M1333.9,312.7C1324.4,315.5 1314.7,318.0 1304.9,320.3M1304.9,320.3C1295.0,322.5 1280.0,325.0 1275.0,326.0M1491.0,229.0C1490.0,232.7 1487.4,244.3 1485.0,251.3M1485.0,251.3C1482.6,258.4 1479.8,265.1 1476.7,271.4M1476.7,271.4C1473.5,277.7 1469.9,283.7 1466.0,289.2M1466.0,289.2C1462.1,294.8 1457.8,299.9 1453.0,304.7M1453.0,304.7C1448.3,309.5 1443.2,313.9 1437.8,318.0M1437.8,318.0C1432.3,322.0 1426.4,325.6 1420.2,328.9M1420.2,328.9C1413.9,332.2 1407.3,335.1 1400.2,337.6M1400.2,337.6C1393.2,340.1 1381.7,342.9 1378.0,344.0M1476.0,288.1C1480.7,285.5 1495.0,277.7 1504.4,272.5M1504.4,272.5C1513.9,267.3 1523.4,261.3 1532.9,256.8M1532.9,256.8C1542.4,252.3 1553.3,248.5 1561.3,245.5M1561.3,245.5C1569.4,242.4 1577.9,239.5 1581.2,238.3"/>
<path stroke="#e0d0a2" stroke-width="1.6" d="M1490.0,258.9C1494.4,258.3 1507.8,257.4 1516.7,255.3M1516.7,255.3C1525.5,253.2 1534.4,249.4 1543.3,246.4M1543.3,246.4C1552.2,243.5 1561.1,240.5 1570.0,237.5M1570.0,237.5C1578.9,234.6 1587.8,231.6 1596.6,228.7M1596.6,228.7C1605.5,225.7 1616.1,222.1 1623.3,219.8M1623.3,219.8C1630.5,217.4 1637.2,215.3 1640.0,214.4"/>
<path stroke="#e0d0a2" stroke-width="1.95" d="M1361.2,211.3C1365.5,207.3 1368.7,205.0 1374.0,200.0M1374.0,200.0C1379.3,194.9 1385.9,187.0 1392.9,180.8M1392.9,180.8C1399.8,174.5 1408.5,168.2 1415.6,162.3M1415.6,162.3C1422.7,156.4 1428.7,150.4 1435.5,145.2M1435.5,145.2C1442.4,140.0 1449.7,135.5 1456.9,131.0M1456.9,131.0C1464.0,126.5 1472.7,121.8 1478.2,118.2M1478.2,118.2C1483.6,114.6 1484.8,113.2 1489.6,109.7M1489.6,109.7C1494.3,106.1 1500.2,101.6 1506.6,96.9M1506.6,96.9C1513.0,92.1 1520.8,86.0 1528.0,81.2M1528.0,81.2C1535.1,76.5 1544.3,71.2 1549.3,68.4M1672.2,91.9C1668.0,93.4 1660.4,97.0 1653.7,99.7M1653.7,99.7C1647.1,102.4 1640.7,104.2 1632.4,108.2M1632.4,108.2C1624.1,112.3 1611.1,120.1 1604.0,123.9M1604.0,123.9C1596.9,127.7 1594.5,128.6 1589.7,131.0M1589.7,131.0C1585.0,133.4 1582.6,135.0 1575.5,138.1M1575.5,138.1C1568.4,141.2 1556.6,145.5 1547.1,149.5M1547.1,149.5C1537.6,153.5 1528.1,158.3 1518.7,162.3M1518.7,162.3C1509.2,166.3 1497.3,170.7 1490.2,173.7M1490.2,173.7C1483.1,176.6 1481.6,177.7 1476.0,180.1M1476.0,180.1C1470.4,182.4 1464.1,184.6 1456.9,187.9M1456.9,187.9C1449.6,191.2 1436.5,197.7 1432.7,200.0M1432.7,200.0C1428.8,202.2 1439.5,198.5 1433.7,201.4M1433.7,201.4C1428.0,204.2 1408.9,211.5 1398.2,217.0M1398.2,217.0C1387.5,222.5 1377.3,230.1 1369.7,234.5M1552.8,165.8C1549.2,167.0 1544.5,167.6 1540.0,169.4M1540.0,169.4C1535.5,171.2 1529.8,173.9 1525.8,176.5M1395.3,248.3C1391.8,249.7 1388.2,251.4 1384.0,254.0M1384.0,254.0C1379.7,256.6 1375.7,260.9 1369.7,263.9M1369.7,263.9C1363.8,267.0 1356.7,270.1 1348.4,272.5M1348.4,272.5C1340.1,274.8 1328.3,277.4 1320.0,278.2M1320.0,278.2C1311.7,278.9 1303.4,277.4 1298.7,276.7M1298.7,276.7C1293.9,276.0 1292.7,274.4 1291.5,273.9M1612.5,97.6C1615.7,97.8 1620.6,97.5 1623.9,98.3M1389.3,312.2C1383.6,313.4 1377.4,314.4 1371.5,315.8M1371.5,315.8C1365.6,317.1 1357.9,319.2 1353.8,320.2M1353.8,320.2C1349.6,321.2 1349.0,321.3 1346.6,322.0M1311.1,323.8C1307.2,324.1 1302.8,324.6 1300.4,325.1M1300.4,277.5C1305.9,277.8 1312.3,278.6 1318.2,278.4M1318.2,278.4C1324.1,278.3 1330.1,277.1 1336.0,276.7M1336.0,276.7C1341.9,276.2 1347.8,276.2 1353.8,275.8M1353.8,275.8C1359.7,275.3 1365.6,274.6 1371.5,274.0M1371.5,274.0C1377.4,273.4 1386.3,272.5 1389.3,272.2M1389.3,272.2C1392.2,271.9 1387.7,272.4 1389.2,272.2M1389.2,272.2C1390.7,272.0 1393.1,271.1 1398.2,271.0M1398.2,271.0C1403.2,271.0 1413.6,271.6 1419.5,271.8M1419.5,271.8C1425.4,271.9 1430.2,271.6 1433.7,271.8M1271.1,295.3C1273.0,295.1 1278.5,294.3 1282.7,294.0M1282.7,294.0C1286.8,293.7 1291.5,293.8 1296.0,293.5M1296.0,293.5C1300.4,293.3 1305.6,293.1 1309.3,292.7M1293.3,281.1C1296.0,281.4 1303.7,282.3 1309.3,282.9M1309.3,282.9C1314.9,283.5 1322.6,284.1 1327.1,284.7M1327.1,284.7C1331.5,285.2 1331.5,285.8 1336.0,286.4M1336.0,286.4C1340.4,287.0 1350.8,287.9 1353.8,288.2M1270.2,295.2C1275.0,295.3 1289.2,296.4 1298.7,295.9M1298.7,295.9C1308.1,295.5 1317.6,292.5 1327.1,292.4M1327.1,292.4C1336.6,292.3 1348.4,294.2 1355.5,295.2M1355.5,295.2C1362.6,296.3 1365.0,298.5 1369.7,298.8M1369.7,298.8C1374.5,299.0 1376.9,297.2 1384.0,296.6M1384.0,296.6C1391.1,296.0 1402.9,296.4 1412.4,295.2M1412.4,295.2C1421.9,294.0 1433.7,291.7 1440.8,289.5M1782.9,78.7C1787.2,79.4 1790.3,79.9 1792.8,80.2M1741.8,97.3C1745.7,96.1 1750.1,94.6 1754.2,93.6M1754.2,93.6C1758.4,92.6 1763.5,91.7 1766.7,91.1M1580.0,174.7C1584.1,173.1 1596.6,168.1 1604.9,164.8M1604.9,164.8C1613.2,161.5 1621.5,158.2 1629.8,154.8M1629.8,154.8C1638.1,151.5 1646.4,148.0 1654.6,144.9M1654.6,144.9C1662.9,141.8 1672.3,138.9 1679.5,136.2M1679.5,136.2C1686.8,133.5 1692.0,131.0 1698.2,128.7M1698.2,128.7C1704.4,126.4 1713.7,123.5 1716.8,122.5M1553.1,167.5C1562.1,165.1 1571.1,168.1 1581.8,163.9M1581.8,163.9C1592.6,159.7 1605.8,148.9 1617.8,142.3M1617.8,142.3C1629.8,135.7 1641.8,129.8 1653.8,124.4M1653.8,124.4C1665.8,119.0 1679.0,113.9 1689.8,110.0M1689.8,110.0C1700.6,106.1 1709.6,104.0 1718.6,101.0M1718.6,101.0C1727.6,98.0 1736.6,94.4 1743.8,92.0M1527.9,207.1C1533.9,205.9 1551.9,202.9 1563.9,199.9M1563.9,199.9C1575.9,196.9 1587.8,193.9 1599.8,189.1M1599.8,189.1C1611.8,184.3 1623.8,177.1 1635.8,171.1M1635.8,171.1C1647.8,165.1 1659.8,159.1 1671.8,153.1M1671.8,153.1C1683.8,147.1 1695.8,141.7 1707.8,135.1M1707.8,135.1C1719.8,128.6 1733.0,119.9 1743.8,113.6M1743.8,113.6C1754.6,107.3 1766.6,101.0 1772.6,97.4M1772.6,97.4C1778.6,93.8 1778.6,92.9 1779.8,92.0"/>
<path stroke="#cbf094" stroke-width="1.5" d="M1491.0,229.0C1496.7,226.0 1513.9,217.1 1525.4,211.3M1525.4,211.3C1536.9,205.5 1548.4,199.7 1560.0,194.0M1560.0,194.0C1571.5,188.4 1583.1,182.8 1594.8,177.2M1594.8,177.2C1606.4,171.7 1618.1,166.3 1629.8,160.9M1629.8,160.9C1641.5,155.5 1653.2,150.2 1665.0,145.0M1665.0,145.0C1676.8,139.8 1688.6,134.6 1700.5,129.5M1700.5,129.5C1712.3,124.5 1724.2,119.5 1736.1,114.5M1736.1,114.5C1748.0,109.6 1766.0,102.4 1772.0,100.0M1491.0,229.0C1497.2,226.4 1515.9,218.5 1528.2,213.2M1528.2,213.2C1540.6,207.9 1553.0,202.5 1565.4,197.1M1565.4,197.1C1577.8,191.7 1590.1,186.3 1602.4,180.8M1602.4,180.8C1614.8,175.4 1627.1,169.8 1639.4,164.3M1639.4,164.3C1651.6,158.8 1663.9,153.2 1676.2,147.6M1676.2,147.6C1688.4,142.0 1700.7,136.3 1712.9,130.6M1712.9,130.6C1725.1,124.9 1737.3,119.2 1749.5,113.4M1749.5,113.4C1761.7,107.6 1779.9,98.9 1786.0,96.0M1491.0,229.0C1497.7,227.0 1518.0,221.4 1531.4,217.2M1531.4,217.2C1544.7,213.0 1557.9,208.5 1571.0,203.7M1571.0,203.7C1584.1,199.0 1597.0,194.0 1609.9,188.7M1609.9,188.7C1622.7,183.5 1635.4,177.9 1648.0,172.2M1648.0,172.2C1660.6,166.4 1673.0,160.3 1685.4,154.0M1685.4,154.0C1697.7,147.7 1709.9,141.1 1722.0,134.2M1722.0,134.2C1734.1,127.4 1746.0,120.3 1757.9,112.9M1757.9,112.9C1769.7,105.5 1787.1,93.8 1793.0,90.0M1491.0,229.0C1497.6,227.5 1517.6,223.2 1530.6,219.8M1530.6,219.8C1543.6,216.3 1556.5,212.5 1569.2,208.3M1569.2,208.3C1581.8,204.1 1594.3,199.5 1606.6,194.6M1606.6,194.6C1618.9,189.6 1631.1,184.3 1643.0,178.6M1643.0,178.6C1655.0,172.9 1666.8,166.8 1678.4,160.3M1678.4,160.3C1690.0,153.9 1701.4,147.0 1712.7,139.8M1712.7,139.8C1723.9,132.6 1735.0,125.0 1745.9,117.0M1745.9,117.0C1756.8,109.1 1772.6,96.2 1778.0,92.0M1491.0,229.0C1498.4,228.0 1520.7,225.7 1535.2,223.1M1535.2,223.1C1549.6,220.6 1563.8,217.5 1577.7,213.8M1577.7,213.8C1591.6,210.1 1605.2,205.8 1618.5,200.9M1618.5,200.9C1631.9,196.0 1644.9,190.6 1657.7,184.5M1657.7,184.5C1670.5,178.5 1683.0,171.9 1695.3,164.6M1695.3,164.6C1707.5,157.4 1719.5,149.6 1731.2,141.3M1731.2,141.3C1742.9,132.9 1754.3,123.9 1765.4,114.4M1765.4,114.4C1776.6,104.8 1792.6,89.1 1798.0,84.0M1491.0,229.0C1497.9,228.8 1519.1,228.8 1532.6,227.6M1532.6,227.6C1546.1,226.5 1559.4,224.7 1572.3,222.2M1572.3,222.2C1585.2,219.7 1597.8,216.5 1610.0,212.6M1610.0,212.6C1622.3,208.8 1634.2,204.3 1645.9,199.0M1645.9,199.0C1657.5,193.8 1668.8,187.9 1679.8,181.4M1679.8,181.4C1690.8,174.8 1701.4,167.6 1711.8,159.7M1711.8,159.7C1722.1,151.7 1732.1,143.1 1741.9,133.9M1741.9,133.9C1751.6,124.6 1765.3,109.0 1770.0,104.0M1491.0,229.0C1497.9,229.6 1519.0,232.3 1532.3,232.8M1532.3,232.8C1545.7,233.2 1558.7,232.8 1571.3,231.6M1571.3,231.6C1583.9,230.4 1596.2,228.3 1608.0,225.4M1608.0,225.4C1619.8,222.5 1631.2,218.8 1642.3,214.3M1642.3,214.3C1653.3,209.7 1664.0,204.4 1674.2,198.2M1674.2,198.2C1684.5,192.0 1694.4,184.9 1703.8,177.1M1703.8,177.1C1713.3,169.2 1722.4,160.5 1731.1,151.0M1731.1,151.0C1739.8,141.5 1751.8,125.2 1756.0,120.0M1491.0,229.0C1486.4,230.7 1472.5,235.9 1463.2,239.2M1463.2,239.2C1453.9,242.4 1444.5,245.4 1435.1,248.3M1435.1,248.3C1425.7,251.2 1416.3,254.0 1406.8,256.5M1406.8,256.5C1397.4,259.1 1387.9,261.5 1378.3,263.8M1378.3,263.8C1368.8,266.0 1359.2,268.1 1349.6,270.0M1349.6,270.0C1340.0,272.0 1330.3,273.7 1320.6,275.3M1320.6,275.3C1310.9,276.9 1301.2,278.4 1291.4,279.7M1291.4,279.7C1281.7,280.9 1266.9,282.4 1262.0,283.0M1491.0,229.0C1486.4,231.3 1472.7,238.4 1463.4,242.8M1463.4,242.8C1454.1,247.1 1444.8,251.2 1435.3,255.1M1435.3,255.1C1425.9,259.0 1416.4,262.6 1406.9,266.0M1406.9,266.0C1397.3,269.4 1387.7,272.6 1378.0,275.5M1378.0,275.5C1368.2,278.4 1358.5,281.1 1348.6,283.5M1348.6,283.5C1338.8,286.0 1328.8,288.2 1318.8,290.1M1318.8,290.1C1308.8,292.1 1298.8,293.8 1288.6,295.3M1288.6,295.3C1278.5,296.8 1263.1,298.4 1258.0,299.0M1491.0,229.0C1487.7,232.3 1477.9,242.7 1471.1,248.9M1471.1,248.9C1464.3,255.2 1457.2,261.1 1450.0,266.6M1450.0,266.6C1442.8,272.2 1435.4,277.3 1427.9,282.1M1427.9,282.1C1420.3,286.9 1412.5,291.3 1404.6,295.3M1404.6,295.3C1396.6,299.4 1388.5,303.0 1380.1,306.3M1380.1,306.3C1371.8,309.6 1363.3,312.6 1354.5,315.1M1354.5,315.1C1345.8,317.7 1336.9,319.9 1327.8,321.7M1327.8,321.7C1318.7,323.5 1304.6,325.3 1300.0,326.0M1491.0,229.0C1489.2,232.6 1484.0,244.0 1480.1,250.9M1480.1,250.9C1476.2,257.8 1471.9,264.3 1467.4,270.4M1467.4,270.4C1462.8,276.5 1457.9,282.3 1452.8,287.6M1452.8,287.6C1447.6,292.9 1442.1,297.8 1436.3,302.4M1436.3,302.4C1430.5,306.9 1424.4,311.1 1418.0,314.8M1418.0,314.8C1411.6,318.6 1404.9,321.9 1397.9,324.9M1397.9,324.9C1390.8,327.9 1383.5,330.5 1375.9,332.6M1375.9,332.6C1368.2,334.8 1356.0,337.1 1352.0,338.0"/>
<path stroke="#cbf094" stroke-width="1.6" d="M1476.0,300.9C1479.6,299.0 1490.2,293.8 1497.3,289.5M1497.3,289.5C1504.4,285.3 1511.5,279.1 1518.7,275.3M1518.7,275.3C1525.8,271.5 1533.8,269.6 1540.0,266.8M1540.0,266.8C1546.1,263.9 1553.0,259.7 1555.6,258.2M1476.0,312.3C1478.8,310.9 1486.9,307.5 1493.1,303.7M1493.1,303.7C1499.2,300.0 1506.3,293.8 1513.0,289.5M1513.0,289.5C1519.6,285.3 1526.7,281.5 1532.9,278.2M1532.9,278.2C1539.0,274.8 1547.1,271.0 1549.9,269.6"/>
<path stroke="#cbf094" stroke-width="1.95" d="M1305.8,254.0C1309.6,251.3 1313.3,248.0 1318.6,244.7M1318.6,244.7C1323.8,241.5 1332.1,237.9 1337.0,234.5M1337.0,234.5C1342.0,231.1 1344.4,228.0 1348.4,224.1M1348.4,224.1C1352.5,220.3 1357.0,215.4 1361.2,211.3M1549.3,68.4C1554.3,65.7 1555.4,65.7 1557.8,64.9M1604.7,94.7C1604.6,95.8 1606.5,98.7 1604.0,101.1M1604.0,101.1C1601.5,103.6 1592.6,108.1 1589.7,109.7M1589.7,109.7C1586.9,111.2 1589.3,109.6 1586.9,110.4M1532.9,139.5C1527.9,142.1 1518.7,145.9 1511.5,149.5M1456.9,176.5C1451.4,179.3 1443.4,182.5 1435.5,186.5M1679.3,90.5C1677.2,90.7 1676.5,90.4 1672.2,91.9M1369.7,234.5C1362.2,238.9 1358.4,240.3 1352.7,243.3M1352.7,243.3C1347.0,246.3 1342.3,249.1 1335.6,252.6M1353.7,285.5C1357.8,283.7 1364.2,280.8 1369.7,278.2M1369.7,278.2C1375.3,275.5 1380.9,272.5 1386.8,269.6M1440.8,246.9C1447.2,244.4 1455.1,241.0 1462.2,238.3M1462.2,238.3C1469.3,235.7 1478.6,232.9 1483.5,231.2M1483.5,231.2C1488.4,229.6 1490.3,228.9 1491.6,228.4M1433.7,302.3C1438.5,300.2 1443.2,297.6 1448.0,295.2M1448.0,295.2C1452.7,292.8 1457.4,291.0 1462.2,288.1M1462.2,288.1C1466.9,285.3 1471.9,281.7 1476.4,278.2M1476.4,278.2C1480.9,274.6 1485.6,270.3 1489.2,266.8M1489.2,266.8C1492.7,263.2 1492.8,260.1 1497.7,256.8M1497.7,256.8C1502.6,253.5 1510.4,249.8 1518.7,246.9M1518.7,246.9C1526.9,243.9 1539.0,240.7 1547.1,239.1M1547.1,239.1C1555.2,237.4 1562.3,237.4 1567.0,236.9M1455.1,303.7C1460.0,301.4 1464.5,298.5 1469.3,295.2M1469.3,295.2C1474.0,291.9 1479.0,287.9 1483.5,283.8M1483.5,283.8C1488.0,279.8 1490.2,275.5 1496.0,271.0M1496.0,271.0C1501.9,266.5 1511.3,260.9 1518.7,256.8M1518.7,256.8C1526.0,252.8 1532.9,249.7 1540.0,246.9M1540.0,246.9C1547.1,244.0 1554.0,241.4 1561.3,239.8M1561.3,239.8C1568.7,238.1 1580.3,237.4 1584.1,236.9M1433.7,318.0C1438.5,316.1 1442.0,315.1 1448.0,312.3M1448.0,312.3C1453.9,309.4 1463.4,304.7 1469.3,300.9M1469.3,300.9C1475.2,297.1 1479.0,293.3 1483.5,289.5M1483.5,289.5C1488.0,285.7 1490.2,282.4 1496.0,278.2M1496.0,278.2C1501.9,273.9 1511.3,268.0 1518.7,263.9M1518.7,263.9C1526.0,259.9 1532.9,256.8 1540.0,254.0M1540.0,254.0C1547.1,251.1 1555.4,248.8 1561.3,246.9M1575.5,242.6C1581.5,241.0 1593.3,237.9 1596.9,236.9M1285.3,276.7C1287.8,276.8 1295.0,277.3 1300.4,277.5M1261.3,293.5C1264.3,291.8 1268.7,288.7 1273.8,285.5M1273.8,285.5C1278.8,282.4 1286.4,278.1 1291.5,274.9M1291.5,274.9C1296.7,271.6 1300.4,269.0 1304.9,266.0M1304.9,266.0C1309.3,263.0 1314.5,259.8 1318.2,257.1M1318.2,257.1C1321.9,254.4 1324.0,253.4 1327.1,250.0M1327.1,250.0C1330.2,246.6 1333.3,241.0 1337.0,236.9M1337.0,236.9C1340.8,232.8 1347.7,227.4 1349.8,225.5M1302.2,303.3C1303.8,304.1 1308.1,304.1 1309.3,304.2M1399.2,337.6C1401.4,338.1 1406.6,340.0 1412.4,340.7M1412.4,340.7C1418.2,341.5 1426.6,342.6 1433.7,342.1M1384.0,330.8C1391.1,329.1 1404.1,324.8 1412.4,322.2M1623.5,219.5C1628.5,219.5 1631.8,219.5 1634.7,218.3M1634.7,218.3C1637.6,217.0 1640.1,214.1 1641.0,212.1M1641.0,212.1C1641.8,210.0 1641.2,207.0 1639.7,205.8M1580.0,184.7C1584.1,182.8 1596.6,177.2 1604.9,173.5M1604.9,173.5C1613.2,169.8 1621.5,166.0 1629.8,162.3M1629.8,162.3C1638.1,158.6 1646.4,154.6 1654.6,151.1M1654.6,151.1C1662.9,147.6 1672.3,144.1 1679.5,141.1M1679.5,141.1C1686.8,138.2 1695.1,134.9 1698.2,133.7M1743.8,92.0C1751.0,89.6 1755.8,88.2 1761.8,86.6M1761.8,86.6C1767.8,84.9 1774.4,82.9 1779.8,81.9M1509.9,221.5C1515.9,219.7 1533.9,213.1 1545.9,210.7M1545.9,210.7C1557.9,208.3 1569.9,208.9 1581.8,207.1M1581.8,207.1C1593.8,205.3 1608.2,198.7 1617.8,199.9M1617.8,199.9C1627.4,201.1 1635.2,212.8 1639.4,214.3M1639.4,214.3C1643.6,215.8 1643.3,210.3 1643.0,208.9M1643.0,208.9C1642.7,207.5 1640.6,206.5 1637.6,206.0M1513.5,214.3C1520.7,210.1 1543.5,193.4 1556.7,189.1M1556.7,189.1C1569.9,184.8 1583.6,188.6 1592.6,188.4M1506.3,232.3C1513.5,230.5 1536.3,224.0 1549.5,221.5M1549.5,221.5C1562.7,219.0 1577.7,217.9 1585.4,217.2M1585.4,217.2C1593.2,216.5 1594.4,217.2 1596.2,217.2M1491.9,250.3C1497.9,249.1 1515.9,245.5 1527.9,243.1M1527.9,243.1C1539.9,240.7 1555.5,236.9 1563.9,235.9M1549.5,239.5C1561.5,234.1 1578.3,226.9 1592.6,221.5M1592.6,221.5C1607.0,216.1 1622.6,212.5 1635.8,207.1M1635.8,207.1C1649.0,201.7 1659.8,196.3 1671.8,189.1M1671.8,189.1C1683.8,181.9 1697.0,172.3 1707.8,163.9M1707.8,163.9C1718.6,155.5 1729.4,146.8 1736.6,138.7M1736.6,138.7C1743.8,130.7 1748.9,119.6 1751.0,115.4M1520.7,221.5C1527.9,220.3 1549.5,217.9 1563.9,214.3M1563.9,214.3C1578.3,210.7 1592.6,205.9 1607.0,199.9M1607.0,199.9C1621.4,193.9 1636.4,185.5 1650.2,178.3M1650.2,178.3C1664.0,171.1 1677.2,164.5 1689.8,156.7"/>
<path stroke="#cbf094" stroke-width="2.2" d="M1484.5,281.0C1487.4,279.1 1497.3,272.2 1501.6,269.6"/>
<path stroke="#cbf094" stroke-width="2.6" d="M1704.4,151.1C1698.2,155.2 1692.0,158.6 1685.7,162.3M1617.3,200.9C1611.5,203.8 1604.9,206.7 1598.7,209.6M1598.7,209.6C1592.4,212.5 1583.1,216.8 1580.0,218.3M1599.8,171.1C1611.8,166.9 1623.8,162.1 1635.8,156.7M1635.8,156.7C1647.8,151.3 1659.8,144.1 1671.8,138.7M1513.5,235.9C1521.9,234.1 1549.5,228.7 1563.9,225.1M1563.9,225.1C1578.3,221.5 1587.8,219.7 1599.8,214.3M1707.8,153.1C1719.8,145.3 1733.0,135.1 1743.8,128.0"/>
<path stroke="#cbf094" stroke-width="2.8" d="M1617.3,193.4C1611.7,196.3 1604.9,199.4 1598.7,202.1M1598.7,202.1C1592.4,204.8 1583.1,208.3 1580.0,209.6"/>
<path stroke="#9af070" stroke-width="1.95" d="M1689.8,156.7C1702.4,148.9 1715.0,139.9 1725.8,131.6M1725.8,131.6C1736.6,123.2 1749.8,110.6 1754.6,106.4"/>
<path stroke="#ff8a80" stroke-width="1.95" d="M1604.7,95.5C1604.3,96.6 1603.8,99.2 1602.5,102.6M1561.3,162.3C1557.5,165.2 1556.3,164.7 1552.8,165.8M1525.8,176.5C1521.7,179.1 1518.7,181.7 1515.8,185.0M1405.3,245.5C1401.3,245.7 1398.9,246.9 1395.3,248.3M1604.7,96.9C1606.0,97.0 1609.3,97.3 1612.5,97.6M1696.4,138.1C1699.2,138.9 1702.3,139.5 1703.5,139.8M1675.1,92.6C1674.4,93.3 1672.7,94.5 1670.8,96.9M1426.6,303.7C1420.8,305.5 1409.4,307.8 1406.0,308.6M1406.0,308.7C1403.2,309.2 1395.0,311.0 1389.3,312.2M1433.7,271.8C1437.3,271.9 1438.5,272.9 1440.8,272.5M1309.3,292.7C1313.0,292.2 1313.8,291.6 1318.2,290.9M1318.2,290.9C1322.6,290.1 1330.1,289.1 1336.0,288.2M1336.0,288.2C1341.9,287.3 1347.8,286.3 1353.8,285.5M1353.8,285.5C1359.7,284.8 1365.6,284.3 1371.5,283.8M1371.5,283.8C1377.4,283.3 1383.6,282.9 1389.3,282.4M1389.3,282.4C1395.0,282.0 1403.2,281.3 1406.0,281.1M1406.0,281.1C1409.4,280.7 1420.8,279.1 1426.6,278.2M1426.6,278.2C1432.4,277.2 1436.1,276.7 1440.8,275.3M1440.8,289.5C1448.0,287.4 1451.5,284.3 1455.1,282.4M1433.7,342.1C1440.8,341.7 1449.1,339.5 1455.1,337.9M1754.2,121.2C1755.6,119.7 1753.6,120.6 1755.5,119.7M1755.5,119.7C1757.4,118.9 1762.5,117.2 1765.4,116.0M1765.4,116.0C1768.3,114.8 1770.6,113.5 1772.9,112.3M1772.9,112.3C1775.2,111.0 1777.0,109.4 1779.1,108.5M1779.1,108.5C1781.2,107.7 1783.9,107.8 1785.3,107.3M1412.4,322.2C1420.7,319.6 1426.6,317.5 1433.7,315.1M1522.9,272.5C1526.2,270.6 1529.3,270.6 1532.9,269.6M1532.9,269.6C1536.4,268.7 1540.5,268.4 1544.2,266.8M1544.2,266.8C1548.0,265.1 1551.8,261.8 1555.6,259.7M1759.2,92.4C1760.9,89.7 1763.2,86.8 1765.4,84.9M1765.4,84.9C1767.7,83.0 1770.0,81.7 1772.9,81.2M1580.0,229.5C1584.1,227.8 1596.6,222.8 1604.9,219.5M1604.9,219.5C1613.2,216.2 1623.5,212.5 1629.8,209.6M1629.8,209.6C1636.0,206.7 1637.0,204.8 1642.2,202.1M1754.2,76.2C1757.8,75.7 1761.9,75.1 1766.7,75.6M1766.7,75.6C1771.4,76.0 1778.5,77.9 1782.9,78.7M1604.9,218.3C1608.0,218.5 1618.6,219.5 1623.5,219.5M1527.9,178.3C1534.5,174.1 1544.1,169.9 1553.1,167.5M1390.0,283.5C1394.4,282.9 1409.3,281.3 1416.7,280.0M1416.7,280.0C1424.1,278.6 1429.2,277.2 1434.4,275.5M1390.0,289.8C1393.7,289.5 1405.6,288.7 1412.2,288.0M1412.2,288.0C1418.9,287.2 1424.8,286.3 1430.0,285.3M1530.0,207.3C1534.4,206.6 1538.1,208.1 1543.3,205.5M1578.9,251.8C1586.3,247.9 1595.3,242.0 1605.5,237.5M1605.5,237.5C1615.7,233.1 1634.3,227.2 1640.0,225.1"/>
<path stroke="#ff8a80" stroke-width="2.6" d="M1499.1,225.1C1503.9,220.9 1517.1,207.1 1527.9,199.9M1527.9,199.9C1538.7,192.7 1551.9,186.7 1563.9,181.9M1563.9,181.9C1575.9,177.1 1587.8,175.3 1599.8,171.1"/>
<path stroke="#ff8a80" stroke-width="2.7" d="M1518.9,208.0C1522.9,205.6 1530.0,202.8 1532.2,201.8M1518.9,220.4C1522.6,217.8 1528.7,215.0 1532.2,213.3M1532.2,213.3C1535.7,211.7 1538.7,211.1 1540.0,210.7M1523.3,232.9C1527.6,230.8 1537.2,227.7 1540.0,226.7"/>
<path stroke="#1fee28" stroke-width="2.5" d="M1271.6,275.3C1274.8,273.4 1279.0,271.1 1283.0,268.6M1283.0,268.6C1287.0,266.2 1292.0,263.1 1295.8,260.7M1295.8,260.7C1299.6,258.2 1302.0,256.6 1305.8,254.0M1557.8,64.9C1560.2,64.1 1561.6,64.1 1563.5,63.5M1586.9,110.4C1584.5,111.2 1580.7,112.2 1575.5,114.6M1575.5,114.6C1570.3,117.1 1561.3,122.1 1555.6,125.3M1555.6,125.3C1549.9,128.5 1545.2,131.5 1541.4,133.8M1541.4,133.8C1537.6,136.2 1537.9,136.9 1532.9,139.5M1511.5,149.5C1504.4,153.0 1496.1,158.0 1490.2,160.9M1490.2,160.9C1484.3,163.7 1479.7,165.1 1476.0,166.5M1476.0,166.5C1472.3,168.0 1471.4,167.7 1468.2,169.4M1468.2,169.4C1465.0,171.0 1462.3,173.7 1456.9,176.5M1435.5,186.5C1427.7,190.4 1414.2,197.7 1409.9,200.0M1409.9,200.0C1405.7,202.2 1413.0,198.1 1409.8,200.0M1409.8,200.0C1406.7,201.8 1396.1,208.2 1391.1,211.3M1391.1,211.3C1386.1,214.4 1382.3,217.0 1379.7,218.4M1335.6,252.6C1329.0,256.0 1320.2,259.9 1312.9,263.9M1312.9,263.9C1305.5,268.0 1298.7,272.5 1291.5,276.7M1291.5,276.7C1284.4,281.0 1275.7,286.2 1270.2,289.5M1270.2,289.5C1264.8,292.9 1261.2,295.4 1258.8,296.9M1332.4,323.6C1330.4,323.5 1327.1,323.3 1323.5,323.3M1323.5,323.3C1320.0,323.3 1314.9,323.5 1311.1,323.8M1291.5,318.0C1295.6,315.5 1301.0,312.3 1305.8,309.4M1305.8,309.4C1310.5,306.5 1316.4,303.1 1320.0,300.6M1320.0,300.6C1323.5,298.1 1322.9,296.3 1327.1,294.4M1327.1,294.4C1331.2,292.4 1340.4,290.6 1344.9,289.1M1344.9,289.1C1349.3,287.6 1349.5,287.4 1353.7,285.5M1386.8,269.6C1392.7,266.8 1399.1,263.8 1405.3,261.1M1405.3,261.1C1411.5,258.4 1417.9,255.6 1423.8,253.3M1423.8,253.3C1429.7,250.9 1434.4,249.4 1440.8,246.9M1305.8,321.1C1308.7,319.2 1313.9,316.4 1318.2,314.0M1318.2,314.0C1322.5,311.6 1327.8,308.9 1331.5,306.9M1331.5,306.9C1335.2,304.8 1338.5,302.8 1340.4,301.5M1340.4,301.5C1342.3,300.3 1343.8,299.8 1343.1,299.3M1367.1,335.3C1370.8,333.1 1376.0,329.8 1380.4,327.3M1380.4,327.3C1384.9,324.8 1389.5,322.4 1393.7,320.2M1393.7,320.2C1398.0,318.0 1404.0,315.0 1406.0,314.0M1406.0,314.0C1408.0,312.9 1403.8,315.0 1406.0,314.0M1406.0,314.0C1408.3,313.0 1414.9,310.0 1419.5,308.0M1419.5,308.0C1424.1,306.1 1429.0,304.5 1433.7,302.3M1567.0,236.9C1571.7,236.5 1572.5,236.6 1575.5,236.4M1406.0,322.0C1407.0,321.5 1403.8,322.9 1406.0,321.9M1406.0,321.9C1408.3,321.0 1414.9,318.4 1419.5,316.5M1419.5,316.5C1424.1,314.7 1430.4,312.0 1433.7,310.9M1433.7,310.9C1437.1,309.7 1435.9,310.6 1439.4,309.4M1439.4,309.4C1443.0,308.3 1450.1,306.1 1455.1,303.7M1380.4,343.3C1383.1,342.1 1385.0,341.1 1389.3,338.9M1389.3,338.9C1393.6,336.6 1403.2,331.5 1406.0,330.0M1406.0,330.0C1408.8,328.5 1403.8,331.0 1406.0,329.9M1406.0,329.9C1408.3,328.9 1414.9,325.6 1419.5,323.7M1419.5,323.7C1424.1,321.7 1429.0,319.9 1433.7,318.0M1561.3,246.9C1567.2,245.0 1569.6,244.3 1575.5,242.6M1256.0,296.2C1256.9,295.8 1258.4,295.3 1261.3,293.5M1785.3,107.3C1786.8,106.8 1787.4,105.7 1787.8,105.4M1369.7,332.2C1374.0,330.8 1376.9,332.4 1384.0,330.8M1772.9,81.2C1775.8,80.6 1779.3,81.8 1782.9,81.8M1782.9,81.8C1786.4,81.8 1791.6,81.4 1794.1,81.2M1779.8,81.9C1785.2,80.9 1790.6,80.7 1794.2,80.5M1592.6,188.4C1601.6,188.2 1607.6,188.1 1610.6,188.0M1563.9,235.9C1572.3,234.9 1574.4,236.7 1578.3,237.0M1488.3,239.5C1493.7,241.9 1510.5,253.9 1520.7,253.9M1520.7,253.9C1530.9,253.9 1537.5,244.9 1549.5,239.5M1751.0,115.4C1753.1,111.2 1749.5,113.9 1749.2,113.6"/>
<path stroke="#1fee28" stroke-width="2.75" d="M1501.6,269.6C1505.9,267.0 1508.7,266.1 1510.1,265.4"/>
<path stroke="#1fee28" stroke-width="3.15" d="M1741.7,123.7C1738.6,126.0 1729.3,132.9 1723.1,137.4M1723.1,137.4C1716.8,142.0 1710.6,147.0 1704.4,151.1M1685.7,162.3C1679.5,166.0 1673.1,169.8 1667.1,173.5M1667.1,173.5C1661.1,177.2 1655.3,181.6 1649.7,184.7M1649.7,184.7C1644.1,187.8 1638.9,189.5 1633.5,192.2M1633.5,192.2C1628.1,194.9 1623.1,198.0 1617.3,200.9M1671.8,138.7C1683.8,133.4 1695.8,129.2 1707.8,124.4M1707.8,124.4C1719.8,119.6 1735.4,113.1 1743.8,110.0M1743.8,110.0C1752.2,106.8 1754.3,106.5 1758.2,105.6M1599.8,214.3C1611.8,208.9 1623.8,199.3 1635.8,192.7M1635.8,192.7C1647.8,186.1 1659.8,181.3 1671.8,174.7M1671.8,174.7C1683.8,168.1 1695.8,160.9 1707.8,153.1M1743.8,128.0C1754.6,120.8 1765.7,113.7 1772.6,110.0M1772.6,110.0C1779.5,106.2 1782.5,106.1 1785.2,105.3M1524.7,202.0C1526.6,201.8 1532.4,201.1 1536.2,200.9M1594.0,189.1C1595.3,189.1 1599.6,189.3 1602.0,189.1M1568.2,238.4C1569.4,238.3 1572.8,238.0 1575.3,237.5M1568.2,247.3C1565.5,248.2 1557.1,250.7 1552.2,252.6M1552.2,252.6C1547.3,254.6 1542.6,257.2 1538.9,258.9M1538.9,258.9C1535.2,260.5 1531.5,261.8 1530.0,262.4M1570.0,209.1C1571.8,208.7 1578.9,206.9 1580.6,206.4M1516.7,243.8C1518.1,243.0 1524.1,240.1 1525.5,239.3M1520.2,222.4C1521.4,222.6 1526.1,223.2 1527.3,223.3"/>
<path stroke="#1fee28" stroke-width="3.35" d="M1729.3,120.0C1727.2,121.2 1721.0,125.0 1716.8,127.5M1716.8,127.5C1712.7,130.0 1708.6,132.0 1704.4,134.9M1704.4,134.9C1700.3,137.8 1696.1,141.8 1692.0,144.9M1692.0,144.9C1687.8,148.0 1683.7,150.7 1679.5,153.6M1679.5,153.6C1675.4,156.5 1672.1,158.8 1667.1,162.3M1667.1,162.3C1662.1,165.8 1655.5,171.0 1649.7,174.7M1649.7,174.7C1643.9,178.5 1637.6,181.6 1632.3,184.7M1632.3,184.7C1626.9,187.8 1622.9,190.5 1617.3,193.4M1608.2,184.2C1610.1,183.3 1615.9,180.7 1619.7,178.9M1619.7,178.9C1623.6,177.1 1629.4,174.4 1631.3,173.6M1623.3,206.4C1624.3,206.4 1627.4,206.1 1629.5,206.0"/>
<path stroke="#1fee28" stroke-width="3.55" d="M1608.6,184.7C1610.5,183.8 1616.1,181.0 1619.8,179.1M1619.8,179.1C1623.5,177.2 1629.1,174.4 1631.0,173.5"/>
<path stroke="#ff4c46" stroke-width="1.95" d="M1572.7,253.3C1577.4,251.4 1584.5,249.1 1589.7,246.9M1589.7,246.9C1595.0,244.6 1599.2,241.9 1604.0,239.8M1604.0,239.8C1608.7,237.6 1613.9,235.8 1618.2,234.1M1618.2,234.1C1622.5,232.4 1623.7,232.1 1629.8,229.5M1629.8,229.5C1635.8,226.8 1646.4,222.0 1654.6,218.3M1654.6,218.3C1662.9,214.6 1672.9,210.2 1679.5,207.1M1584.1,246.9C1590.2,244.0 1599.5,239.0 1604.0,236.9M1604.0,236.9C1608.5,234.9 1605.8,236.7 1611.1,234.5M1611.1,234.5C1616.4,232.2 1628.7,226.6 1636.0,223.3"/>
<path stroke="#ff1a1a" stroke-width="1.95" d="M1602.5,102.6C1601.2,105.9 1599.2,110.6 1596.9,115.4M1596.9,115.4C1594.5,120.1 1591.9,125.5 1588.3,131.0M1588.3,131.0C1584.8,136.5 1580.0,142.8 1575.5,148.1M1575.5,148.1C1571.0,153.3 1565.1,159.3 1561.3,162.3M1515.8,185.0C1513.0,188.3 1509.9,194.5 1508.7,196.4M1439.4,259.7C1438.0,258.5 1434.2,254.7 1430.9,252.6M1430.9,252.6C1427.6,250.4 1423.8,248.1 1419.5,246.9M1419.5,246.9C1415.2,245.7 1409.3,245.2 1405.3,245.5M1623.9,98.3C1627.2,99.1 1629.3,100.7 1632.4,102.6M1632.4,102.6C1635.5,104.5 1638.8,107.2 1642.4,109.7M1642.4,109.7C1645.9,112.2 1649.9,114.9 1653.7,117.5M1675.1,131.0C1678.6,132.7 1682.9,134.1 1686.4,135.3M1686.4,135.3C1690.0,136.5 1693.5,137.4 1696.4,138.1M1670.8,96.9C1668.9,99.2 1666.1,103.5 1663.7,106.8M1663.7,106.8C1661.3,110.1 1659.4,112.5 1656.6,116.8M1629.6,150.9C1624.8,154.0 1617.7,157.1 1611.1,160.9M1611.1,160.9C1604.4,164.7 1596.9,169.4 1589.7,173.7M1589.7,173.7C1582.6,177.9 1574.6,182.4 1568.4,186.5M1568.4,186.5C1562.3,190.5 1555.4,195.9 1552.8,197.8M1552.8,197.8C1550.2,199.7 1554.9,196.5 1552.8,197.8M1552.8,197.8C1550.6,199.1 1544.5,202.9 1540.0,205.6M1540.0,205.6C1535.5,208.4 1530.5,211.3 1525.8,214.2M1525.8,214.2C1521.0,217.0 1515.8,219.9 1511.5,222.7M1511.5,222.7C1507.3,225.5 1503.7,227.9 1500.2,231.2M1452.2,289.5C1449.4,292.4 1445.1,295.7 1440.8,298.1M1440.8,298.1C1436.6,300.4 1432.4,302.0 1426.6,303.7M1440.8,272.5C1443.2,272.0 1445.6,269.9 1448.0,268.9M1448.0,268.9C1450.3,268.0 1453.9,267.1 1455.1,266.8M1406.0,281.1C1408.8,280.9 1402.6,281.6 1406.0,281.1M1440.8,275.3C1445.6,273.9 1451.0,272.0 1455.1,269.6M1455.1,269.6C1459.1,267.3 1461.2,264.9 1465.0,261.1M1455.1,282.4C1458.6,280.5 1461.0,278.9 1462.2,278.2M1455.1,337.9C1461.0,336.2 1465.5,334.1 1469.3,332.2M1469.3,332.2C1473.1,330.3 1474.5,329.3 1477.8,326.5M1477.8,326.5C1481.1,323.7 1489.5,315.1 1489.2,315.1M1494.5,308.0C1497.8,304.2 1500.4,300.7 1504.4,298.1M1504.4,298.1C1508.5,295.5 1514.4,294.3 1518.7,292.4M1518.7,292.4C1522.9,290.5 1526.5,289.5 1530.0,286.7M1530.0,286.7C1533.6,283.8 1536.7,278.9 1540.0,275.3M1540.0,275.3C1543.3,271.8 1546.4,268.2 1549.9,265.4M1549.9,265.4C1553.5,262.5 1557.5,260.3 1561.3,258.2M1561.3,258.2C1565.1,256.2 1567.9,255.2 1572.7,253.3M1679.5,207.1C1686.2,204.0 1690.3,202.1 1694.5,199.6M1694.5,199.6C1698.6,197.1 1701.5,195.1 1704.4,192.2M1704.4,192.2C1707.3,189.3 1709.6,185.5 1711.9,182.2M1711.9,182.2C1714.2,178.9 1716.0,175.8 1718.1,172.3M1731.8,149.9C1734.3,146.1 1736.8,142.2 1739.2,138.7M1739.2,138.7C1741.7,135.1 1744.2,131.6 1746.7,128.7M1746.7,128.7C1749.2,125.8 1752.7,122.7 1754.2,121.2M1433.7,315.1C1440.8,312.8 1449.1,309.9 1455.1,308.0M1455.1,308.0C1461.0,306.1 1463.6,305.4 1469.3,303.7M1469.3,303.7C1475.0,302.1 1488.1,297.4 1489.2,298.1M1489.2,298.1C1490.3,298.8 1475.8,307.3 1476.0,308.0M1476.0,308.0C1476.2,308.7 1485.7,304.2 1490.2,302.3M1490.2,302.3C1494.7,300.4 1499.2,300.2 1503.0,296.6M1503.0,296.6C1506.8,293.1 1509.7,285.0 1513.0,281.0M1513.0,281.0C1516.3,277.0 1519.6,274.4 1522.9,272.5M1555.6,259.7C1559.4,257.5 1562.3,256.1 1567.0,254.0M1567.0,254.0C1571.7,251.9 1577.9,249.7 1584.1,246.9M1636.0,223.3C1643.2,219.9 1649.5,217.5 1654.6,214.6M1654.6,214.6C1659.8,211.6 1662.9,208.7 1667.1,205.8M1667.1,205.8C1671.2,202.9 1675.4,199.8 1679.5,197.1M1679.5,197.1C1683.7,194.4 1688.2,192.4 1692.0,189.7M1723.1,152.3C1725.8,148.6 1728.9,144.7 1731.8,141.1M1731.8,141.1C1734.7,137.6 1737.8,134.3 1740.5,131.2M1740.5,131.2C1743.2,128.1 1746.7,124.6 1748.0,122.5M1748.0,122.5C1749.2,120.4 1747.2,120.6 1748.0,118.5M1748.0,118.5C1748.8,116.4 1751.7,112.7 1753.0,109.8M1753.0,109.8C1754.2,106.9 1754.4,104.0 1755.5,101.1M1755.5,101.1C1756.5,98.2 1757.6,95.1 1759.2,92.4M1642.2,202.1C1647.4,199.4 1655.1,196.1 1660.9,193.4M1660.9,193.4C1666.7,190.7 1672.3,188.4 1677.0,185.9M1677.0,185.9C1681.8,183.4 1685.7,181.2 1689.5,178.5M1689.5,178.5C1693.2,175.8 1696.5,172.7 1699.4,169.8M1734.3,92.4C1735.4,89.9 1736.2,87.2 1738.1,84.9M1738.1,84.9C1739.9,82.6 1742.8,80.1 1745.5,78.7M1745.5,78.7C1748.2,77.2 1750.7,76.7 1754.2,76.2M1592.4,209.6C1596.6,207.9 1610.1,202.5 1617.3,199.6M1617.3,199.6C1624.6,196.7 1629.8,194.6 1636.0,192.2M1636.0,192.2C1642.2,189.7 1649.0,187.2 1654.6,184.7M1654.6,184.7C1660.2,182.2 1664.8,179.7 1669.6,177.2M1669.6,177.2C1674.3,174.7 1679.5,172.0 1683.3,169.8M1683.3,169.8C1687.0,167.5 1689.3,166.0 1692.0,163.5M1714.4,126.2C1715.4,123.7 1716.1,121.9 1716.8,120.0M1716.8,120.0C1717.6,118.1 1717.7,117.1 1718.8,114.8M1718.8,114.8C1719.8,112.4 1721.1,108.3 1723.1,106.0M1723.1,106.0C1725.1,103.8 1727.5,102.5 1730.6,101.1M1730.6,101.1C1733.7,99.6 1737.8,98.6 1741.8,97.3M1434.4,275.5C1439.6,273.9 1445.5,271.1 1447.8,270.2M1430.0,285.3C1435.2,284.3 1438.7,283.5 1443.3,281.8M1443.3,281.8C1447.9,280.0 1455.2,275.8 1457.5,274.6M1490.0,225.1C1492.2,223.9 1498.9,220.5 1503.3,218.0M1503.3,218.0C1507.8,215.5 1512.2,211.8 1516.7,210.0M1516.7,210.0C1521.1,208.2 1525.5,208.1 1530.0,207.3M1543.3,205.5C1548.5,203.0 1555.2,196.2 1561.1,192.2M1561.1,192.2C1567.0,188.2 1572.2,185.3 1578.9,181.6M1578.9,181.6C1585.5,177.8 1597.4,171.9 1601.1,170.0M1547.8,270.0C1550.0,268.4 1555.9,263.7 1561.1,260.6M1561.1,260.6C1566.3,257.6 1571.5,255.6 1578.9,251.8"/>
<path stroke="#ff1a1a" stroke-width="2.7" d="M1499.3,224.9C1502.0,221.6 1504.9,218.8 1508.2,216.0M1508.2,216.0C1511.4,213.2 1514.9,210.4 1518.9,208.0M1452.2,292.4C1454.1,290.3 1459.6,284.7 1463.8,280.0M1508.2,217.8C1510.7,214.8 1512.8,212.7 1516.2,210.7M1516.2,210.7C1519.6,208.6 1526.6,206.2 1528.6,205.3M1457.5,300.0C1459.3,298.1 1464.6,292.9 1468.2,288.9M1510.0,229.3C1512.5,226.4 1515.2,223.1 1518.9,220.4M1508.2,246.2C1510.4,243.1 1511.9,241.3 1514.4,239.1M1514.4,239.1C1516.9,236.9 1519.0,235.0 1523.3,232.9M1494.9,273.8C1497.8,269.6 1500.8,265.8 1503.7,262.2M1503.7,262.2C1506.7,258.7 1510.1,255.1 1512.6,252.4M1512.6,252.4C1515.2,249.8 1517.8,247.2 1518.9,246.2"/>
<path stroke="#ff1a1a" stroke-width="4" d="M1443.3,284.4C1444.8,283.7 1449.2,281.5 1452.2,280.0M1452.2,280.0C1455.2,278.5 1459.6,276.3 1461.1,275.5"/>
<path stroke="#ff1a1a" stroke-width="4.5" d="M1445.1,285.3C1446.8,284.3 1453.4,280.5 1455.1,279.6"/>
<path stroke="#ff1a1a" stroke-width="5" d="M1450.8,305.2C1452.7,304.2 1460.3,300.4 1462.2,299.5"/>
<path stroke="#ff12c6" stroke-width="1.95" d="M1508.7,196.4C1507.5,198.3 1509.4,194.6 1508.7,196.4M1508.7,196.4C1508.0,198.2 1506.3,203.4 1504.4,207.1M1504.4,207.1C1502.5,210.7 1499.5,214.9 1497.3,218.4M1497.3,218.4C1495.2,222.0 1492.6,226.7 1491.6,228.4M1491.6,228.4C1490.7,230.0 1493.0,227.0 1491.6,228.4M1491.6,228.4C1490.2,229.8 1486.5,233.8 1483.5,236.9M1483.5,236.9C1480.5,240.0 1477.1,243.3 1473.5,246.9M1473.5,246.9C1470.0,250.4 1465.5,254.7 1462.2,258.2M1462.2,258.2C1458.9,261.8 1455.1,266.5 1453.6,268.2M1653.7,117.5C1657.5,120.1 1661.6,123.1 1665.1,125.3M1665.1,125.3C1668.7,127.6 1671.5,129.3 1675.1,131.0M1656.6,116.8C1653.7,121.0 1649.5,128.2 1646.6,132.4M1646.6,132.4C1643.8,136.7 1642.4,139.3 1639.5,142.4M1639.5,142.4C1636.7,145.5 1634.3,147.8 1629.6,150.9M1500.2,231.2C1496.6,234.6 1493.3,238.8 1490.2,242.6M1490.2,242.6C1487.1,246.4 1484.1,250.9 1481.7,254.0M1481.7,254.0C1479.3,257.1 1477.0,259.9 1476.0,261.1M1476.0,261.1C1475.0,262.3 1477.6,259.4 1476.0,261.1M1476.0,261.1C1474.4,262.8 1469.4,267.7 1466.4,271.0M1466.4,271.0C1463.4,274.4 1460.3,277.9 1457.9,281.0M1457.9,281.0C1455.5,284.1 1455.1,286.7 1452.2,289.5M1465.0,261.1C1468.8,257.3 1473.8,251.4 1477.8,246.9M1477.8,246.9C1481.8,242.4 1487.3,236.2 1489.2,234.1M1489.2,315.1C1488.9,315.1 1476.8,325.6 1476.0,326.5M1476.0,326.5C1475.2,327.4 1481.5,323.9 1484.5,320.8M1484.5,320.8C1487.6,317.7 1491.2,311.8 1494.5,308.0M1718.1,172.3C1720.2,168.7 1722.0,164.8 1724.3,161.1M1724.3,161.1C1726.6,157.3 1729.3,153.6 1731.8,149.9M1692.0,189.7C1695.7,187.0 1699.0,183.9 1701.9,181.0M1701.9,181.0C1704.8,178.1 1707.1,175.2 1709.4,172.3M1709.4,172.3C1711.7,169.3 1713.3,166.9 1715.6,163.5M1715.6,163.5C1717.9,160.2 1720.4,156.1 1723.1,152.3M1699.4,169.8C1702.3,166.9 1704.6,164.2 1706.9,161.1M1706.9,161.1C1709.2,157.9 1711.3,154.4 1713.1,151.1M1713.1,151.1C1715.0,147.8 1716.6,144.5 1718.1,141.1M1718.1,141.1C1719.5,137.8 1720.8,134.1 1721.8,131.2M1721.8,131.2C1722.9,128.3 1723.7,125.6 1724.3,123.7M1724.3,123.7C1724.9,121.8 1724.8,122.1 1725.6,119.7M1725.6,119.7C1726.4,117.4 1728.3,113.1 1729.3,109.8M1729.3,109.8C1730.4,106.5 1731.0,102.7 1731.8,99.8M1731.8,99.8C1732.7,96.9 1733.3,94.8 1734.3,92.4M1692.0,163.5C1694.7,161.1 1697.2,157.9 1699.4,154.8M1699.4,154.8C1701.7,151.7 1703.8,148.2 1705.7,144.9M1705.7,144.9C1707.5,141.6 1709.2,138.0 1710.6,134.9M1710.6,134.9C1712.1,131.8 1713.3,128.7 1714.4,126.2M1491.9,228.7C1495.5,222.7 1507.5,201.1 1513.5,192.7M1513.5,192.7C1519.5,184.3 1521.3,182.5 1527.9,178.3"/>
<path stroke="#ff12c6" stroke-width="2.7" d="M1452.2,267.5C1454.4,265.5 1461.1,259.4 1465.5,255.1M1465.5,255.1C1470.0,250.8 1475.2,245.5 1478.9,241.8M1478.9,241.8C1482.6,238.1 1484.8,236.6 1487.8,232.9M1487.8,232.9C1490.7,229.2 1493.7,224.1 1496.6,219.6M1496.6,219.6C1499.6,215.0 1503.5,208.6 1505.5,205.3M1505.5,205.3C1507.6,202.1 1508.5,200.9 1509.1,200.0M1461.1,271.1C1463.3,268.9 1470.3,262.2 1474.4,257.8M1474.4,257.8C1478.6,253.3 1483.0,248.1 1486.0,244.4M1486.0,244.4C1488.9,240.7 1490.0,238.8 1492.2,235.5M1492.2,235.5C1494.4,232.3 1496.6,228.1 1499.3,224.9M1463.8,280.0C1467.9,275.2 1473.1,269.0 1477.1,264.0M1477.1,264.0C1481.1,258.9 1484.8,253.9 1487.8,249.8M1487.8,249.8C1490.7,245.6 1492.6,242.7 1494.9,239.1M1494.9,239.1C1497.1,235.5 1498.9,232.0 1501.1,228.4M1501.1,228.4C1503.3,224.9 1505.7,220.7 1508.2,217.8M1468.2,288.9C1471.8,284.8 1475.6,280.0 1478.9,275.5M1478.9,275.5C1482.1,271.1 1484.8,266.6 1487.8,262.2M1487.8,262.2C1490.7,257.8 1494.0,252.9 1496.6,248.9M1496.6,248.9C1499.3,244.9 1501.5,241.5 1503.7,238.2M1503.7,238.2C1506.0,235.0 1507.5,232.3 1510.0,229.3M1466.4,300.0C1467.8,299.6 1471.6,300.3 1474.4,297.8M1474.4,297.8C1477.2,295.2 1480.3,288.9 1483.3,284.4M1483.3,284.4C1486.3,280.0 1489.2,275.5 1492.2,271.1M1492.2,271.1C1495.2,266.6 1498.4,261.9 1501.1,257.8M1501.1,257.8C1503.7,253.6 1506.0,249.3 1508.2,246.2M1477.1,300.0C1478.6,297.8 1483.0,291.5 1486.0,287.1M1486.0,287.1C1488.9,282.7 1491.9,277.9 1494.9,273.8"/>
<path stroke="#ff12c6" stroke-width="3.0" d="M1470.0,288.9C1471.9,286.2 1478.0,278.1 1481.5,272.9M1481.5,272.9C1485.1,267.7 1488.3,262.5 1491.3,257.8M1491.3,257.8C1494.3,253.0 1497.1,248.1 1499.3,244.4M1499.3,244.4C1501.5,240.7 1503.7,237.0 1504.6,235.5"/>
<path stroke="#ff12c6" stroke-width="3.2" d="M1455.8,276.4C1458.1,273.9 1465.5,266.4 1470.0,261.3M1470.0,261.3C1474.4,256.3 1479.0,250.5 1482.4,246.2M1482.4,246.2C1485.8,241.9 1487.9,239.4 1490.4,235.5M1490.4,235.5C1492.9,231.7 1496.3,225.2 1497.5,223.1"/>
<path stroke="#ff12c6" stroke-width="4.5" d="M1453.6,268.2C1452.5,267.5 1448.9,265.4 1446.5,263.9M1446.5,263.9C1444.2,262.5 1440.6,260.4 1439.4,259.7"/>
<path stroke="#20e4de" stroke-width="1.95" d="M1263.8,280.3C1265.7,279.1 1268.4,277.3 1271.6,275.3M1563.5,63.5C1565.4,62.9 1567.2,62.3 1569.2,61.3M1603.3,90.5C1604.1,91.2 1604.4,94.0 1604.7,94.7M1379.7,218.4C1377.1,219.9 1377.1,219.8 1375.4,220.1M1369.7,220.7C1366.8,221.0 1359.7,221.8 1357.7,222.0M1685.0,90.5C1683.1,90.6 1681.5,90.2 1679.3,90.5M1258.8,296.9C1256.5,298.5 1256.5,298.5 1256.0,298.8M1346.6,322.0C1344.3,322.6 1341.3,323.9 1339.5,324.2M1281.6,324.4C1284.0,322.8 1287.5,320.5 1291.5,318.0M1343.1,299.3C1342.3,298.8 1338.3,298.4 1336.0,298.4M1336.0,298.4C1333.6,298.5 1331.3,299.0 1328.9,299.8M1328.9,299.8C1326.4,300.5 1322.6,302.4 1321.3,302.9M1358.2,340.6C1360.6,339.2 1363.4,337.5 1367.1,335.3M1575.5,236.4C1578.6,236.1 1583.8,235.6 1585.5,235.5M1400.0,324.6C1401.9,323.9 1405.0,322.4 1406.0,322.0M1305.8,294.9C1304.6,294.9 1299.7,294.1 1298.7,294.9M1298.7,294.9C1297.6,295.7 1299.0,298.4 1299.5,299.8M1299.5,299.8C1300.1,301.2 1300.6,302.6 1302.2,303.3M1358.4,339.3C1361.2,337.3 1365.5,333.6 1369.7,332.2M1794.1,81.2C1796.5,81.0 1796.4,80.6 1797.8,80.5M1792.8,80.2C1795.3,80.5 1797.0,80.5 1797.8,80.5M1766.7,91.1C1769.9,90.5 1772.4,90.1 1773.5,89.9M1623.5,207.1C1620.0,207.8 1613.2,209.2 1611.1,209.6M1794.2,80.5C1797.8,80.2 1800.2,80.5 1801.4,80.5M1578.3,237.0C1582.1,237.3 1585.7,237.6 1587.2,237.7"/>
<path stroke="#20e4de" stroke-width="2.4" d="M1587.8,216.2C1588.8,216.3 1592.2,216.8 1594.0,216.9"/>
<path stroke="#20e4de" stroke-width="2.6" d="M1596.2,189.7C1597.6,189.5 1602.2,188.7 1604.9,188.4M1758.2,105.6C1762.1,104.7 1765.7,104.7 1767.2,104.6M1785.2,105.3C1787.9,104.4 1788.2,105.0 1788.8,104.9M1536.2,200.9C1540.1,200.7 1545.8,200.7 1547.8,200.7M1602.0,189.1C1604.3,188.9 1606.3,188.0 1608.2,187.8M1575.3,237.5C1577.8,237.1 1581.5,236.2 1583.3,235.9"/>
<path stroke="#20e4de" stroke-width="2.8" d="M1629.5,206.0C1631.6,205.8 1634.0,205.7 1635.7,205.5"/>
<path stroke="#20e4de" stroke-width="3" d="M1381.3,300.7C1381.5,301.1 1382.4,302.9 1382.6,303.3"/>
<path stroke="#20e4de" stroke-width="4" d="M1457.5,279.1C1458.1,278.6 1460.5,276.9 1461.1,276.4"/>
<path stroke="#1660ff" stroke-width="1.95" d="M1569.2,61.3C1571.2,60.4 1573.5,59.2 1575.5,57.8M1575.5,57.8C1577.5,56.4 1579.9,54.8 1581.2,52.8M1599.7,90.5C1601.0,90.1 1602.4,89.8 1603.3,90.5M1690.7,89.8C1689.8,89.9 1686.9,90.4 1685.0,90.5M1300.4,325.1C1298.1,325.5 1297.5,326.2 1296.9,326.4M1300.4,325.1C1301.9,324.2 1302.8,322.9 1305.8,321.1M1394.6,326.4C1396.4,325.8 1398.1,325.4 1400.0,324.6M1352.7,344.3C1353.6,343.4 1355.5,341.3 1358.4,339.3M1797.8,80.5C1799.1,80.4 1801.4,80.5 1802.1,80.5M1639.7,205.8C1638.3,204.7 1634.9,205.0 1632.3,205.2M1632.3,205.2C1629.6,205.4 1627.1,206.4 1623.5,207.1M1637.6,206.0C1634.6,205.6 1627.1,206.3 1625.0,206.4"/>
<path stroke="#1660ff" stroke-width="2.6" d="M1604.9,188.4C1607.6,188.1 1611.1,187.9 1612.3,187.8M1608.2,187.8C1610.0,187.6 1612.3,188.0 1613.1,188.0M1583.3,235.9C1585.2,235.6 1585.9,235.8 1586.4,235.8"/>
<path stroke="#1660ff" stroke-width="2.8" d="M1635.7,205.5C1637.5,205.4 1639.3,205.2 1640.0,205.1"/>
<path stroke="#0c1a96" stroke-width="1.95" d="M1260.3,282.4C1260.9,282.1 1261.9,281.5 1263.8,280.3M1581.2,52.8C1582.5,50.8 1582.5,47.8 1583.4,45.7M1375.4,220.1C1373.8,220.5 1372.7,220.4 1369.7,220.7M1277.3,327.2C1278.0,326.7 1279.2,325.9 1281.6,324.4M1296.9,326.4C1297.5,326.2 1299.0,326.0 1300.4,325.1M1352.9,344.2C1353.8,343.6 1355.8,342.1 1358.2,340.6M1373.3,346.0C1374.5,345.5 1377.7,344.5 1380.4,343.3"/>
<path stroke="#0c1a96" stroke-width="2.4" d="M1594.0,216.9C1595.7,217.0 1597.7,216.8 1598.4,216.7"/>
<path stroke="#0c1a96" stroke-width="3.4" d="M1795.3,80.5C1796.1,80.5 1799.5,80.5 1800.3,80.5M1772.0,89.4C1772.5,89.5 1774.6,90.2 1775.1,90.4M1783.4,96.1C1783.8,95.9 1785.6,95.1 1786.1,94.8M1783.8,102.9C1784.3,103.2 1786.4,104.4 1786.9,104.7M1771.2,104.6C1771.5,104.6 1773.0,105.0 1773.4,105.1M1761.8,102.6C1762.2,102.7 1763.7,103.1 1764.1,103.2M1748.9,113.4C1749.5,113.0 1751.5,111.5 1752.1,111.2M1688.4,90.0C1688.8,90.0 1690.3,89.8 1690.6,89.7M1688.0,89.9C1688.4,89.9 1690.1,89.7 1690.6,89.6M1595.3,91.9C1595.8,91.8 1597.9,91.2 1598.4,91.0M1258.7,283.0C1259.2,282.8 1261.3,282.0 1261.8,281.9M1255.0,299.5C1255.3,299.4 1256.7,299.0 1257.0,298.9M1276.3,328.1C1276.7,327.8 1278.0,326.6 1278.3,326.4M1295.1,327.5C1295.6,327.3 1297.5,326.3 1297.9,326.1M1320.1,303.2C1320.6,303.0 1322.3,302.2 1322.7,302.0M1338.3,324.8C1338.8,324.7 1340.9,324.1 1341.5,323.9M1353.1,345.3C1353.4,344.9 1354.8,343.6 1355.1,343.3M1373.3,346.7C1373.5,346.6 1374.5,346.2 1374.7,346.1M1388.8,346.7C1389.1,346.6 1390.2,346.2 1390.5,346.1"/>
<path stroke="#0c1a96" stroke-width="3.5" d="M1392.1,341.1C1393.3,340.6 1398.0,338.2 1399.2,337.6"/>
<path stroke="#000000" stroke-width="1.95" d="M1583.4,45.7C1584.2,43.6 1585.1,39.5 1586.2,40.0M1586.2,40.0C1587.3,40.5 1588.7,44.3 1589.7,48.5M1589.7,48.5C1590.8,52.8 1591.8,59.9 1592.6,65.6M1592.6,65.6C1593.4,71.3 1594.3,78.2 1594.7,82.7M1594.7,82.7C1595.2,87.2 1594.6,91.3 1595.4,92.6M1595.4,92.6C1596.3,93.9 1598.4,90.8 1599.7,90.5M1339.5,324.2C1337.8,324.5 1337.2,324.0 1336.0,323.9M1336.0,323.9C1334.8,323.8 1334.5,323.7 1332.4,323.6M1376.9,333.5C1378.9,332.6 1386.3,329.4 1389.3,328.2M1389.3,328.2C1392.3,327.0 1392.9,327.0 1394.6,326.4"/>
<path stroke="#000000" stroke-width="2" d="M1684.5,146.1C1685.0,146.0 1686.6,145.5 1687.0,145.4M1690.8,144.6C1691.6,144.4 1694.9,143.4 1695.7,143.1"/>
<path stroke="#000000" stroke-width="2.6" d="M1660.3,150.2C1662.9,149.5 1673.2,146.6 1675.8,145.9"/>
<path stroke="#000000" stroke-width="4" d="M1703.8,139.7C1705.2,140.1 1710.6,141.7 1711.9,142.1"/>
</g>
<ellipse cx="1491.6" cy="229.6" rx="4.0" ry="7.6" transform="rotate(26 1491.6 229.6)" fill="#000"/>
<path d="M1586.6,236.2 L1549.9,282.1 L1589.7,279.3 L1588.3,238.3" fill="none" stroke="#111" stroke-width="1.5" stroke-linejoin="round"/>
<rect x="1588.4" y="238.4" width="3" height="3" fill="#000"/>
<line x1="1489.7" y1="41" x2="1489.7" y2="346.5" stroke="#3c3c3c" stroke-width="1.4"/>
<line x1="1257" y1="234.6" x2="1933" y2="234.6" stroke="#3c3c3c" stroke-width="1.4"/>
<line x1="1267.2" y1="60.7" x2="1304.0" y2="60.7" stroke="#1e1e1e" stroke-width="1.7"/><line x1="1316.1000000000001" y1="60.7" x2="1392.3" y2="60.7" stroke="#1e1e1e" stroke-width="1.7"/><rect x="1304.8" y="52.7" width="8.9" height="17" fill="#e6e6e6"/><path d="M1314.7,51.2 V71.0 H1304.0" fill="none" stroke="#1a1a1a" stroke-width="1.9"/>
</svg>
<div class="b" style="left:0.00px;top:1098.20px;width:1937.00px;height:2.40px;background:#f0f0f0;"></div>
<div class="b" style="left:0.00px;top:1100.40px;width:1937.00px;height:1.60px;background:#8e8e8e;"></div>
<div class="b" style="left:0.00px;top:1102.00px;width:1937.00px;height:23.00px;background:#ececec;"></div>
<span class="t d" style="left:-4.4px;top:1105.3px;transform:scaleX(0.999);">2.0</span>
<span class="t d" style="left:30.0px;top:1105.3px;transform:scaleX(0.918);">s</span>
<span class="t d" style="left:46.0px;top:1105.3px;transform:scaleX(0.994);">(1)</span>
<span class="t d" style="left:75.5px;top:1105.3px;transform:scaleX(1.082);">40.275</span>
<span class="t d" style="left:146.3px;top:1105.3px;transform:scaleX(1.191);">+/−</span>
<span class="t d" style="left:186.7px;top:1105.3px;transform:scaleX(1.091);">0.258</span>
<span class="t d" style="left:244.4px;top:1105.3px;transform:scaleX(1.052);">kn</span>
<span class="t d" style="left:279.7px;top:1105.3px;transform:scaleX(0.999);">2.0</span>
<span class="t d" style="left:314.1px;top:1105.3px;transform:scaleX(0.918);">s</span>
<span class="t d" style="left:330.1px;top:1105.3px;transform:scaleX(0.994);">(2)</span>
<span class="t d" style="left:359.6px;top:1105.3px;transform:scaleX(1.082);">40.263</span>
<span class="t d" style="left:430.4px;top:1105.3px;transform:scaleX(1.191);">+/−</span>
<span class="t d" style="left:470.8px;top:1105.3px;transform:scaleX(1.091);">0.314</span>
<span class="t d" style="left:528.5px;top:1105.3px;transform:scaleX(1.052);">kn</span>
<span class="t d" style="left:563.8px;top:1105.3px;transform:scaleX(0.999);">2.0</span>
<span class="t d" style="left:598.2px;top:1105.3px;transform:scaleX(0.918);">s</span>
<span class="t d" style="left:614.2px;top:1105.3px;transform:scaleX(0.994);">(3)</span>
<span class="t d" style="left:643.7px;top:1105.3px;transform:scaleX(1.082);">40.100</span>
<span class="t d" style="left:714.5px;top:1105.3px;transform:scaleX(1.191);">+/−</span>
<span class="t d" style="left:754.9px;top:1105.3px;transform:scaleX(1.091);">0.513</span>
<span class="t d" style="left:812.6px;top:1105.3px;transform:scaleX(1.052);">kn</span>
<span class="t d" style="left:1077.0px;top:1105.3px;transform:scaleX(1.107);">0030_2022−01−05−1601.oao</span>
<span class="t d" style="left:1351.8px;top:1105.3px;transform:scaleX(1.028);">&amp;</span>
<span class="t d" style="left:1370.4px;top:1105.3px;transform:scaleX(1.107);">0028_2022−01−05−1608.oao</span>
<span class="t d" style="left:1645.2px;top:1105.3px;transform:scaleX(1.028);">&amp;</span>
<span class="t d" style="left:1663.8px;top:1105.3px;transform:scaleX(1.113);">2687_2022−01−05−1611.oao</span>
<svg class="b" style="left:0;top:1113px" width="1937" height="12"><path d="M0,12 V5 Q0.5,10 5,12 Z" fill="#222"/><path d="M1937,12 V3 Q1936,10 1929,12 Z" fill="#222"/></svg>
</div></body></html>
